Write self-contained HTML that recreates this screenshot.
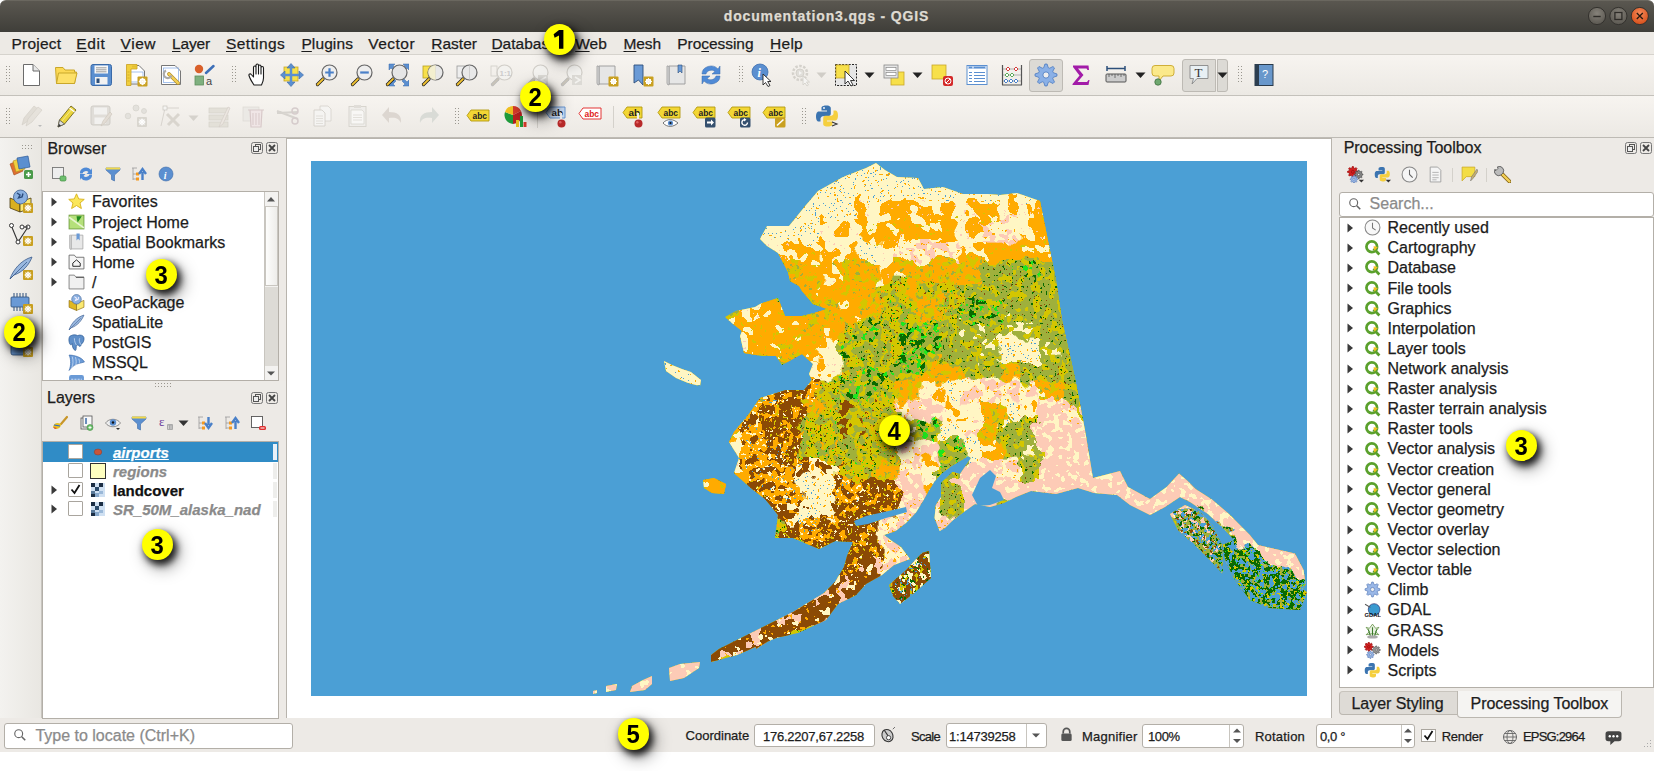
<!DOCTYPE html>
<html><head><meta charset="utf-8">
<style>
*{margin:0;padding:0;box-sizing:border-box}
html,body{width:1654px;height:771px;overflow:hidden;background:#fff;font-family:"Liberation Sans",sans-serif;color:#000}
.a,.abs{position:absolute}
.t{white-space:nowrap;-webkit-text-stroke:0.25px currentColor}
u{text-decoration:underline;text-underline-offset:2px}
#title{left:0;top:0;width:1654px;height:32px;background:linear-gradient(#5a5750,#3f3e39);border-radius:6px 6px 0 0;border-top:1px solid #6a675f}
#menu{left:0;top:32px;width:1654px;height:23px;background:#edeae5;border-bottom:1px solid #d6d3cd}
#tb1{left:0;top:55px;width:1654px;height:41px;background:linear-gradient(#f7f4f0,#ece9e4);border-bottom:1px solid #c4c1bb}
#tb2{left:0;top:96px;width:1654px;height:42px;background:linear-gradient(#f7f4f0,#ece9e4);border-bottom:1px solid #bdbab4}
#main{left:0;top:138px;width:1654px;height:580px;background:#edeae6}
#lefttb{left:0;top:138px;width:42px;height:580px;background:linear-gradient(90deg,#f3f2ef,#e9e7e2);border-right:1px solid #c8c5bf}
#status{left:0;top:718px;width:1654px;height:34px;background:#edeae6}
#canvas{left:286px;top:138px;width:1046px;height:581px;background:#fff;border:1px solid #b8b4ad}
.badge{border-radius:50%;background:#ffff00;box-shadow:3px 4px 7px 1px rgba(0,0,0,.85),5px 7px 16px 2px rgba(0,0,0,.35);text-align:center;font-weight:bold;color:#000;font-family:"Liberation Sans",sans-serif}
</style></head><body>
<div id="title" class="abs"></div>
<div id="menu" class="abs"></div>
<div id="tb1" class="abs"></div>
<div id="tb2" class="abs"></div>
<div id="main" class="abs"></div>
<div id="lefttb" class="abs"></div>
<div id="canvas" class="abs"></div>
<svg class="abs" style="left:311px;top:161px" width="996" height="535" viewBox="311 161 996 535">
<defs>
<clipPath id="land"><path d="M760,239 L767,226 L789,226 L806,205 L818,191 L843,177 L866,168 L876,163 L885,170 L897,177 L918,178 L924,189 L943,187 L963,194 L988,194 L1000,195 L1017,193 L1040,201 L1056,280 L1062,320 L1075,378 L1085,430 L1093,478 L1120,471 L1128,487 L1150,499 L1166.6,487 L1179,473.5 L1187.4,480.8 L1195.6,489 L1212,499.4 L1229,514 L1249.6,534.7 L1258,545 L1295,553.4 L1303.6,570 L1305.6,584.5 L1300,592 L1285,585 L1262,562 L1245,552 L1225,530 L1208,514 L1190,502 L1180,497 L1165,507 L1150,515 L1130,505 L1117,495 L1094,493 L1078,488 L1056,494 L1031,491 L1016,497 L1004,503 L990,507 L975,504 L963,512.6 L952.6,520.4 L945,528 L939.7,531 L934.5,518 L935.8,505 L941,497 L941,483 L952.6,472 L960,474 L971,458 L968,456 L950,467 L941,474 L934.5,481.5 L928,492 L923,501 L916,512.6 L906,523 L895.6,531 L884,535 L892,541 L901,547 L910,559 L894,565 L882,575 L866,584 L856,595 L838,604 L826,620 L798,633 L776,638 L737,655 L711,662 L711,655 L719,649 L759,629 L793,612 L824,593 L835,582 L844,567 L847,556 L853,542 L835,541 L819,549 L793,538 L775,538 L778,515 L765,499 L752,489 L734,473 L739,458 L729,442 L734,432 L749,414 L760,398 L786,390 L804,390 L812,380 L809,374 L813,364 L802,354 L791,360 L782,365 L776,356 L762,356 L744,353 L740,336 L742,331 L733,324 L725,317 L736,311 L755,307 L760,304 L778,298 L785,316 L802,316 L814,313 L827,309 L813,304 L802,291 L799,286 L790,281 L788,272 L778,253 L767,246 Z M664,361 L672,365 L682,369 L691,372 L701,380 L700,386 L688,383 L676,378 L666,371 Z M703,480 L714,478 L726,484 L724,494 L712,493 L704,488 Z M889,585 L905,571 L922,553 L929,551 L931,578 L914,593 L900,604 L893,596 Z M669,668 L680,664 L700,662 L699,668 L684,678 L670,681 Z M643,680 L652,676 L652,684 L645,690 L630,692 L632,686 Z M606,686 L617,684 L616,690 L606,692 Z M593,691 L597,690 L597,693 L593,694 Z M754,632 L771,627 L770,640 L756,649 Z M1170,514 L1185,505 L1200,512 L1212,525 L1222,545 L1223,574 L1210,560 L1195,545 L1178,530 Z M1222,545 L1240,538 L1262,564 L1290,582 L1307,592 L1300,610 L1270,608 L1250,600 L1235,580 L1226,562 Z"/></clipPath>
<filter id="disp" filterUnits="userSpaceOnUse" x="300" y="150" width="1020" height="560"><feTurbulence type="fractalNoise" baseFrequency="0.045" numOctaves="3" seed="11" result="t"/><feDisplacementMap in="SourceGraphic" in2="t" scale="26" xChannelSelector="R" yChannelSelector="G"/></filter>
<mask id="mC" maskUnits="userSpaceOnUse" x="300" y="150" width="1020" height="560"><g fill="#fff" filter="url(#disp)"><rect x="820" y="160" width="20.6" height="20.6"/><rect x="840" y="160" width="20.6" height="20.6"/><rect x="860" y="160" width="20.6" height="20.6"/><rect x="880" y="160" width="20.6" height="20.6"/><rect x="900" y="160" width="20.6" height="20.6"/><rect x="920" y="160" width="20.6" height="20.6"/><rect x="780" y="180" width="20.6" height="20.6"/><rect x="800" y="180" width="20.6" height="20.6"/><rect x="820" y="180" width="20.6" height="20.6"/><rect x="840" y="180" width="20.6" height="20.6"/><rect x="860" y="180" width="20.6" height="20.6"/><rect x="880" y="180" width="20.6" height="20.6"/><rect x="900" y="180" width="20.6" height="20.6"/><rect x="920" y="180" width="20.6" height="20.6"/><rect x="940" y="180" width="20.6" height="20.6"/><rect x="960" y="180" width="20.6" height="20.6"/><rect x="980" y="180" width="20.6" height="20.6"/><rect x="1020" y="180" width="20.6" height="20.6"/><rect x="760" y="200" width="20.6" height="20.6"/><rect x="780" y="200" width="20.6" height="20.6"/><rect x="800" y="200" width="20.6" height="20.6"/><rect x="820" y="200" width="20.6" height="20.6"/><rect x="840" y="200" width="20.6" height="20.6"/><rect x="740" y="220" width="20.6" height="20.6"/><rect x="760" y="220" width="20.6" height="20.6"/><rect x="780" y="220" width="20.6" height="20.6"/><rect x="800" y="220" width="20.6" height="20.6"/><rect x="860" y="240" width="20.6" height="20.6"/><rect x="1000" y="340" width="20.6" height="20.6"/><rect x="1020" y="340" width="20.6" height="20.6"/><rect x="940" y="380" width="20.6" height="20.6"/><rect x="1000" y="400" width="20.6" height="20.6"/><rect x="940" y="420" width="20.6" height="20.6"/><rect x="960" y="440" width="20.6" height="20.6"/><rect x="800" y="480" width="20.6" height="20.6"/><rect x="820" y="480" width="20.6" height="20.6"/><rect x="800" y="500" width="20.6" height="20.6"/><path d="M655,350 L710,350 L710,392 L655,392 Z"/></g></mask>
<mask id="mQ" maskUnits="userSpaceOnUse" x="300" y="150" width="1020" height="560"><g fill="#fff" filter="url(#disp)"><rect x="1000" y="180" width="20.6" height="20.6"/><rect x="1040" y="180" width="20.6" height="20.6"/><rect x="860" y="200" width="20.6" height="20.6"/><rect x="880" y="200" width="20.6" height="20.6"/><rect x="900" y="200" width="20.6" height="20.6"/><rect x="920" y="200" width="20.6" height="20.6"/><rect x="940" y="200" width="20.6" height="20.6"/><rect x="960" y="200" width="20.6" height="20.6"/><rect x="1000" y="200" width="20.6" height="20.6"/><rect x="1020" y="200" width="20.6" height="20.6"/><rect x="820" y="220" width="20.6" height="20.6"/><rect x="840" y="220" width="20.6" height="20.6"/><rect x="960" y="220" width="20.6" height="20.6"/><rect x="1020" y="220" width="20.6" height="20.6"/><rect x="760" y="240" width="20.6" height="20.6"/><rect x="780" y="240" width="20.6" height="20.6"/><rect x="820" y="240" width="20.6" height="20.6"/><rect x="840" y="240" width="20.6" height="20.6"/><rect x="880" y="240" width="20.6" height="20.6"/><rect x="960" y="240" width="20.6" height="20.6"/><rect x="820" y="260" width="20.6" height="20.6"/><rect x="880" y="260" width="20.6" height="20.6"/><rect x="740" y="300" width="20.6" height="20.6"/><rect x="720" y="320" width="20.6" height="20.6"/><rect x="700" y="340" width="20.6" height="20.6"/><rect x="720" y="340" width="20.6" height="20.6"/><rect x="820" y="340" width="20.6" height="20.6"/><rect x="800" y="360" width="20.6" height="20.6"/><rect x="820" y="360" width="20.6" height="20.6"/><rect x="920" y="380" width="20.6" height="20.6"/><rect x="940" y="400" width="20.6" height="20.6"/><rect x="960" y="400" width="20.6" height="20.6"/><rect x="1020" y="400" width="20.6" height="20.6"/><rect x="720" y="440" width="20.6" height="20.6"/><rect x="720" y="460" width="20.6" height="20.6"/><rect x="920" y="460" width="20.6" height="20.6"/><rect x="920" y="480" width="20.6" height="20.6"/></g></mask>
<mask id="mO" maskUnits="userSpaceOnUse" x="300" y="150" width="1020" height="560"><g fill="#fff" filter="url(#disp)"><rect x="980" y="200" width="20.6" height="20.6"/><rect x="1040" y="200" width="20.6" height="20.6"/><rect x="860" y="220" width="20.6" height="20.6"/><rect x="880" y="220" width="20.6" height="20.6"/><rect x="900" y="220" width="20.6" height="20.6"/><rect x="920" y="220" width="20.6" height="20.6"/><rect x="940" y="220" width="20.6" height="20.6"/><rect x="1040" y="220" width="20.6" height="20.6"/><rect x="800" y="240" width="20.6" height="20.6"/><rect x="980" y="240" width="20.6" height="20.6"/><rect x="1000" y="240" width="20.6" height="20.6"/><rect x="1020" y="240" width="20.6" height="20.6"/><rect x="1040" y="240" width="20.6" height="20.6"/><rect x="800" y="260" width="20.6" height="20.6"/><rect x="780" y="280" width="20.6" height="20.6"/><rect x="820" y="280" width="20.6" height="20.6"/><rect x="760" y="300" width="20.6" height="20.6"/><rect x="780" y="300" width="20.6" height="20.6"/><rect x="840" y="300" width="20.6" height="20.6"/><rect x="740" y="320" width="20.6" height="20.6"/><rect x="760" y="320" width="20.6" height="20.6"/><rect x="780" y="320" width="20.6" height="20.6"/><rect x="820" y="320" width="20.6" height="20.6"/><rect x="740" y="340" width="20.6" height="20.6"/><rect x="760" y="340" width="20.6" height="20.6"/><rect x="800" y="340" width="20.6" height="20.6"/><rect x="720" y="420" width="20.6" height="20.6"/><rect x="980" y="440" width="20.6" height="20.6"/><path d="M695,472 L732,472 L732,500 L695,500 Z"/></g></mask>
<mask id="mK" maskUnits="userSpaceOnUse" x="300" y="150" width="1020" height="560"><g fill="#fff" filter="url(#disp)"><rect x="980" y="220" width="20.6" height="20.6"/><rect x="1000" y="220" width="20.6" height="20.6"/><rect x="900" y="240" width="20.6" height="20.6"/><rect x="920" y="240" width="20.6" height="20.6"/><rect x="940" y="240" width="20.6" height="20.6"/><rect x="960" y="380" width="20.6" height="20.6"/><rect x="980" y="380" width="20.6" height="20.6"/><rect x="1000" y="380" width="20.6" height="20.6"/><rect x="1020" y="380" width="20.6" height="20.6"/><rect x="900" y="400" width="20.6" height="20.6"/><rect x="1060" y="400" width="20.6" height="20.6"/><rect x="960" y="420" width="20.6" height="20.6"/><rect x="900" y="440" width="20.6" height="20.6"/><rect x="900" y="460" width="20.6" height="20.6"/><rect x="1000" y="460" width="20.6" height="20.6"/><rect x="900" y="500" width="20.6" height="20.6"/><rect x="920" y="500" width="20.6" height="20.6"/><rect x="880" y="520" width="20.6" height="20.6"/><rect x="900" y="520" width="20.6" height="20.6"/><rect x="920" y="520" width="20.6" height="20.6"/><rect x="940" y="520" width="20.6" height="20.6"/><rect x="880" y="540" width="20.6" height="20.6"/><rect x="900" y="540" width="20.6" height="20.6"/><rect x="880" y="560" width="20.6" height="20.6"/><rect x="900" y="560" width="20.6" height="20.6"/><path d="M785,610 L830,596 L832,622 L795,634 Z"/><path d="M745,640 L770,632 L770,648 L750,652 Z"/></g></mask>
<mask id="mM" maskUnits="userSpaceOnUse" x="300" y="150" width="1020" height="560"><g fill="#fff" filter="url(#disp)"><rect x="780" y="260" width="20.6" height="20.6"/><rect x="840" y="260" width="20.6" height="20.6"/><rect x="860" y="260" width="20.6" height="20.6"/><rect x="900" y="260" width="20.6" height="20.6"/><rect x="920" y="260" width="20.6" height="20.6"/><rect x="940" y="260" width="20.6" height="20.6"/><rect x="960" y="260" width="20.6" height="20.6"/><rect x="800" y="280" width="20.6" height="20.6"/><rect x="840" y="280" width="20.6" height="20.6"/><rect x="860" y="280" width="20.6" height="20.6"/><rect x="900" y="280" width="20.6" height="20.6"/><rect x="800" y="300" width="20.6" height="20.6"/><rect x="820" y="300" width="20.6" height="20.6"/><rect x="860" y="300" width="20.6" height="20.6"/><rect x="920" y="300" width="20.6" height="20.6"/><rect x="800" y="320" width="20.6" height="20.6"/><rect x="780" y="340" width="20.6" height="20.6"/><rect x="920" y="360" width="20.6" height="20.6"/><rect x="940" y="360" width="20.6" height="20.6"/><rect x="1000" y="360" width="20.6" height="20.6"/><rect x="900" y="380" width="20.6" height="20.6"/><rect x="1040" y="380" width="20.6" height="20.6"/><rect x="800" y="400" width="20.6" height="20.6"/><rect x="980" y="400" width="20.6" height="20.6"/><rect x="980" y="420" width="20.6" height="20.6"/><rect x="880" y="460" width="20.6" height="20.6"/></g></mask>
<mask id="mL" maskUnits="userSpaceOnUse" x="300" y="150" width="1020" height="560"><g fill="#fff" filter="url(#disp)"><rect x="980" y="260" width="20.6" height="20.6"/><rect x="1000" y="260" width="20.6" height="20.6"/><rect x="1040" y="260" width="20.6" height="20.6"/><rect x="1060" y="260" width="20.6" height="20.6"/><rect x="960" y="280" width="20.6" height="20.6"/><rect x="980" y="280" width="20.6" height="20.6"/><rect x="1000" y="280" width="20.6" height="20.6"/><rect x="1020" y="280" width="20.6" height="20.6"/><rect x="1040" y="280" width="20.6" height="20.6"/><rect x="1060" y="280" width="20.6" height="20.6"/><rect x="1000" y="300" width="20.6" height="20.6"/><rect x="1020" y="300" width="20.6" height="20.6"/><rect x="1040" y="300" width="20.6" height="20.6"/><rect x="1060" y="300" width="20.6" height="20.6"/><rect x="940" y="320" width="20.6" height="20.6"/><rect x="980" y="320" width="20.6" height="20.6"/><rect x="1040" y="320" width="20.6" height="20.6"/><rect x="1060" y="320" width="20.6" height="20.6"/><rect x="860" y="340" width="20.6" height="20.6"/><rect x="940" y="340" width="20.6" height="20.6"/><rect x="960" y="340" width="20.6" height="20.6"/><rect x="1060" y="340" width="20.6" height="20.6"/><rect x="960" y="360" width="20.6" height="20.6"/><rect x="980" y="360" width="20.6" height="20.6"/><rect x="1020" y="360" width="20.6" height="20.6"/><rect x="1040" y="360" width="20.6" height="20.6"/><rect x="1060" y="360" width="20.6" height="20.6"/><rect x="1060" y="380" width="20.6" height="20.6"/><rect x="1080" y="380" width="20.6" height="20.6"/><rect x="1080" y="400" width="20.6" height="20.6"/><rect x="1000" y="420" width="20.6" height="20.6"/><rect x="1020" y="420" width="20.6" height="20.6"/><rect x="840" y="440" width="20.6" height="20.6"/><rect x="1000" y="440" width="20.6" height="20.6"/><rect x="940" y="460" width="20.6" height="20.6"/><rect x="1020" y="460" width="20.6" height="20.6"/><rect x="940" y="480" width="20.6" height="20.6"/><rect x="940" y="500" width="20.6" height="20.6"/></g></mask>
<mask id="mG" maskUnits="userSpaceOnUse" x="300" y="150" width="1020" height="560"><g fill="#fff" filter="url(#disp)"><rect x="1020" y="260" width="20.6" height="20.6"/><rect x="980" y="300" width="20.6" height="20.6"/><rect x="860" y="320" width="20.6" height="20.6"/><rect x="900" y="320" width="20.6" height="20.6"/><rect x="920" y="320" width="20.6" height="20.6"/><rect x="840" y="340" width="20.6" height="20.6"/><rect x="920" y="340" width="20.6" height="20.6"/><rect x="860" y="360" width="20.6" height="20.6"/><rect x="880" y="360" width="20.6" height="20.6"/><rect x="900" y="360" width="20.6" height="20.6"/><rect x="840" y="380" width="20.6" height="20.6"/><rect x="860" y="380" width="20.6" height="20.6"/><rect x="920" y="420" width="20.6" height="20.6"/><rect x="940" y="440" width="20.6" height="20.6"/></g></mask>
<mask id="mD" maskUnits="userSpaceOnUse" x="300" y="150" width="1020" height="560"><g fill="#fff" filter="url(#disp)"><rect x="960" y="300" width="20.6" height="20.6"/><rect x="900" y="340" width="20.6" height="20.6"/></g></mask>
<mask id="mE" maskUnits="userSpaceOnUse" x="300" y="150" width="1020" height="560"><g fill="#fff" filter="url(#disp)"><rect x="960" y="320" width="20.6" height="20.6"/><rect x="1000" y="320" width="20.6" height="20.6"/><rect x="1020" y="320" width="20.6" height="20.6"/><rect x="980" y="340" width="20.6" height="20.6"/><rect x="1040" y="340" width="20.6" height="20.6"/><rect x="900" y="420" width="20.6" height="20.6"/><rect x="1020" y="440" width="20.6" height="20.6"/></g></mask>
<mask id="mW" maskUnits="userSpaceOnUse" x="300" y="150" width="1020" height="560"><g fill="#fff" filter="url(#disp)"><rect x="760" y="380" width="20.6" height="20.6"/><rect x="800" y="380" width="20.6" height="20.6"/><rect x="740" y="400" width="20.6" height="20.6"/><rect x="740" y="420" width="20.6" height="20.6"/><rect x="740" y="440" width="20.6" height="20.6"/><rect x="760" y="440" width="20.6" height="20.6"/><rect x="740" y="460" width="20.6" height="20.6"/><rect x="760" y="460" width="20.6" height="20.6"/><rect x="780" y="460" width="20.6" height="20.6"/><rect x="760" y="480" width="20.6" height="20.6"/><rect x="780" y="480" width="20.6" height="20.6"/><rect x="840" y="480" width="20.6" height="20.6"/><rect x="800" y="520" width="20.6" height="20.6"/></g></mask>
<mask id="mB" maskUnits="userSpaceOnUse" x="300" y="150" width="1020" height="560"><g fill="#fff" filter="url(#disp)"><rect x="780" y="380" width="20.6" height="20.6"/><rect x="760" y="400" width="20.6" height="20.6"/><rect x="780" y="400" width="20.6" height="20.6"/><rect x="760" y="420" width="20.6" height="20.6"/><rect x="780" y="420" width="20.6" height="20.6"/><rect x="780" y="440" width="20.6" height="20.6"/><rect x="740" y="480" width="20.6" height="20.6"/><rect x="860" y="480" width="20.6" height="20.6"/><rect x="880" y="480" width="20.6" height="20.6"/><rect x="760" y="500" width="20.6" height="20.6"/><rect x="840" y="500" width="20.6" height="20.6"/><rect x="860" y="500" width="20.6" height="20.6"/><rect x="880" y="500" width="20.6" height="20.6"/><rect x="780" y="520" width="20.6" height="20.6"/><rect x="820" y="520" width="20.6" height="20.6"/><rect x="840" y="520" width="20.6" height="20.6"/><rect x="860" y="520" width="20.6" height="20.6"/><rect x="800" y="540" width="20.6" height="20.6"/><rect x="820" y="540" width="20.6" height="20.6"/><rect x="840" y="540" width="20.6" height="20.6"/><rect x="860" y="540" width="20.6" height="20.6"/><rect x="820" y="560" width="20.6" height="20.6"/><rect x="840" y="560" width="20.6" height="20.6"/></g></mask>
<mask id="mU" maskUnits="userSpaceOnUse" x="300" y="150" width="1020" height="560"><g fill="#fff" filter="url(#disp)"><rect x="840" y="400" width="20.6" height="20.6"/><rect x="840" y="420" width="20.6" height="20.6"/></g></mask>
<mask id="mP" maskUnits="userSpaceOnUse" x="300" y="150" width="1020" height="560"><g fill="#fff" filter="url(#disp)"><rect x="920" y="400" width="20.6" height="20.6"/><rect x="1040" y="400" width="20.6" height="20.6"/><rect x="1040" y="420" width="20.6" height="20.6"/><rect x="1060" y="420" width="20.6" height="20.6"/><rect x="1080" y="420" width="20.6" height="20.6"/><rect x="920" y="440" width="20.6" height="20.6"/><rect x="1040" y="440" width="20.6" height="20.6"/><rect x="1060" y="440" width="20.6" height="20.6"/><rect x="1080" y="440" width="20.6" height="20.6"/><rect x="960" y="460" width="20.6" height="20.6"/><rect x="980" y="460" width="20.6" height="20.6"/><rect x="1040" y="460" width="20.6" height="20.6"/><rect x="1060" y="460" width="20.6" height="20.6"/><rect x="1080" y="460" width="20.6" height="20.6"/><rect x="900" y="480" width="20.6" height="20.6"/><rect x="960" y="480" width="20.6" height="20.6"/><rect x="980" y="480" width="20.6" height="20.6"/><rect x="1000" y="480" width="20.6" height="20.6"/><rect x="1020" y="480" width="20.6" height="20.6"/><rect x="1040" y="480" width="20.6" height="20.6"/><rect x="1060" y="480" width="20.6" height="20.6"/><rect x="1080" y="480" width="20.6" height="20.6"/><rect x="960" y="500" width="20.6" height="20.6"/><rect x="980" y="500" width="20.6" height="20.6"/><rect x="960" y="520" width="20.6" height="20.6"/><path d="M590,660 L712,655 L712,700 L590,700 Z"/><path d="M1090,455 L1200,470 L1310,540 L1310,600 L1262,575 L1200,510 L1150,525 L1090,505 Z"/><path d="M1085,380 L1110,380 L1110,470 L1085,470 Z"/></g></mask>
<mask id="mX" maskUnits="userSpaceOnUse" x="300" y="150" width="1020" height="560"><g fill="#fff" filter="url(#disp)"><rect x="800" y="460" width="20.6" height="20.6"/><rect x="820" y="460" width="20.6" height="20.6"/><rect x="780" y="500" width="20.6" height="20.6"/><rect x="820" y="500" width="20.6" height="20.6"/></g></mask>
<mask id="mR" maskUnits="userSpaceOnUse" x="300" y="150" width="1020" height="560"><g fill="#fff" filter="url(#disp)"><rect x="860" y="560" width="20.6" height="20.6"/><path d="M700,575 L870,575 L860,600 L820,625 L760,650 L700,670 Z"/></g></mask>
<mask id="mZ" maskUnits="userSpaceOnUse" x="300" y="150" width="1020" height="560"><g fill="#fff" filter="url(#disp)"><rect x="920" y="560" width="20.6" height="20.6"/><path d="M884,588 L903,568 L920,548 L934,546 L936,580 L916,598 L900,609 L888,600 Z"/></g></mask>
<mask id="mV" maskUnits="userSpaceOnUse" x="300" y="150" width="1020" height="560"><g fill="#fff" filter="url(#disp)"><path d="M1165,508 L1205,505 L1225,530 L1230,580 L1195,560 Z"/></g></mask>
<mask id="mI" maskUnits="userSpaceOnUse" x="300" y="150" width="1020" height="560"><g fill="#fff" filter="url(#disp)"><path d="M1218,538 L1262,560 L1310,580 L1310,615 L1240,615 L1220,570 Z"/></g></mask>
<filter id="n_Y_8" filterUnits="userSpaceOnUse" x="311" y="161" width="996" height="535" color-interpolation-filters="sRGB"><feTurbulence type="fractalNoise" baseFrequency="0.12" numOctaves="2" seed="8" result="n"/><feColorMatrix in="n" type="matrix" values="0 0 0 0 0  0 0 0 0 0  0 0 0 0 0  1.6 0 0 0 -0.3" result="a"/><feComponentTransfer in="a" result="m"><feFuncA type="discrete" tableValues="0 0 0 0 0 0 0 0 0 0 0 0 0 0 0 0 0 0 0 0 0 0 0 1 1 1 1 1 1 1 1 1 1 1 1 1 1 1 1 1"/></feComponentTransfer><feComposite in="SourceGraphic" in2="m" operator="in"/></filter>
<filter id="n_Y_9" filterUnits="userSpaceOnUse" x="311" y="161" width="996" height="535" color-interpolation-filters="sRGB"><feTurbulence type="fractalNoise" baseFrequency="0.3" numOctaves="2" seed="9" result="n"/><feColorMatrix in="n" type="matrix" values="0 0 0 0 0  0 0 0 0 0  0 0 0 0 0  1.6 0 0 0 -0.3" result="a"/><feComponentTransfer in="a" result="m"><feFuncA type="discrete" tableValues="0 0 0 0 0 0 0 0 0 0 0 0 0 0 0 0 0 0 0 0 0 0 0 0 0 0 0 0 0 0 0 0 0 1 1 1 1 1 1 1"/></feComponentTransfer><feComposite in="SourceGraphic" in2="m" operator="in"/></filter>
<filter id="n_Y_10" filterUnits="userSpaceOnUse" x="311" y="161" width="996" height="535" color-interpolation-filters="sRGB"><feTurbulence type="fractalNoise" baseFrequency="0.2" numOctaves="2" seed="10" result="n"/><feColorMatrix in="n" type="matrix" values="0 0 0 0 0  0 0 0 0 0  0 0 0 0 0  1.6 0 0 0 -0.3" result="a"/><feComponentTransfer in="a" result="m"><feFuncA type="discrete" tableValues="0 0 0 0 0 0 0 0 0 0 0 0 0 0 0 0 0 0 0 0 0 0 0 0 0 0 0 0 0 0 0 0 1 1 1 1 1 1 1 1"/></feComponentTransfer><feComposite in="SourceGraphic" in2="m" operator="in"/></filter>
<filter id="n_Y_11" filterUnits="userSpaceOnUse" x="311" y="161" width="996" height="535" color-interpolation-filters="sRGB"><feTurbulence type="fractalNoise" baseFrequency="0.4" numOctaves="2" seed="11" result="n"/><feColorMatrix in="n" type="matrix" values="0 0 0 0 0  0 0 0 0 0  0 0 0 0 0  1.6 0 0 0 -0.3" result="a"/><feComponentTransfer in="a" result="m"><feFuncA type="discrete" tableValues="0 0 0 0 0 0 0 0 0 0 0 0 0 0 0 0 0 0 0 0 0 0 0 0 0 0 0 0 0 0 0 0 0 0 1 1 1 1 1 1"/></feComponentTransfer><feComposite in="SourceGraphic" in2="m" operator="in"/></filter>
<filter id="n_Y_12" filterUnits="userSpaceOnUse" x="311" y="161" width="996" height="535" color-interpolation-filters="sRGB"><feTurbulence type="fractalNoise" baseFrequency="0.4" numOctaves="2" seed="12" result="n"/><feColorMatrix in="n" type="matrix" values="0 0 0 0 0  0 0 0 0 0  0 0 0 0 0  1.6 0 0 0 -0.3" result="a"/><feComponentTransfer in="a" result="m"><feFuncA type="discrete" tableValues="0 0 0 0 0 0 0 0 0 0 0 0 0 0 0 0 0 0 0 0 0 0 0 0 0 0 0 0 0 0 0 0 0 0 0 0 1 1 1 1"/></feComponentTransfer><feComposite in="SourceGraphic" in2="m" operator="in"/></filter>
<filter id="n_C_1" filterUnits="userSpaceOnUse" x="311" y="161" width="996" height="535" color-interpolation-filters="sRGB"><feTurbulence type="fractalNoise" baseFrequency="0.3" numOctaves="2" seed="1" result="n"/><feColorMatrix in="n" type="matrix" values="0 0 0 0 0  0 0 0 0 0  0 0 0 0 0  1.6 0 0 0 -0.3" result="a"/><feComponentTransfer in="a" result="m"><feFuncA type="discrete" tableValues="0 0 0 0 0 0 0 0 0 0 0 0 0 0 0 0 0 0 0 0 0 0 0 0 0 0 0 0 0 0 0 0 0 1 1 1 1 1 1 1"/></feComponentTransfer><feComposite in="SourceGraphic" in2="m" operator="in"/></filter>
<filter id="n_C_2" filterUnits="userSpaceOnUse" x="311" y="161" width="996" height="535" color-interpolation-filters="sRGB"><feTurbulence type="fractalNoise" baseFrequency="0.6" numOctaves="2" seed="2" result="n"/><feColorMatrix in="n" type="matrix" values="0 0 0 0 0  0 0 0 0 0  0 0 0 0 0  1.6 0 0 0 -0.3" result="a"/><feComponentTransfer in="a" result="m"><feFuncA type="discrete" tableValues="0 0 0 0 0 0 0 0 0 0 0 0 0 0 0 0 0 0 0 0 0 0 0 0 0 0 0 0 0 0 0 0 0 0 1 1 1 1 1 1"/></feComponentTransfer><feComposite in="SourceGraphic" in2="m" operator="in"/></filter>
<filter id="n_Q_3" filterUnits="userSpaceOnUse" x="311" y="161" width="996" height="535" color-interpolation-filters="sRGB"><feTurbulence type="fractalNoise" baseFrequency="0.06" numOctaves="2" seed="3" result="n"/><feColorMatrix in="n" type="matrix" values="0 0 0 0 0  0 0 0 0 0  0 0 0 0 0  1.6 0 0 0 -0.3" result="a"/><feComponentTransfer in="a" result="m"><feFuncA type="discrete" tableValues="0 0 0 0 0 0 0 0 0 0 0 0 0 0 0 0 0 0 0 0 0 0 1 1 1 1 1 1 1 1 1 1 1 1 1 1 1 1 1 1"/></feComponentTransfer><feComposite in="SourceGraphic" in2="m" operator="in"/></filter>
<filter id="n_Q_34" filterUnits="userSpaceOnUse" x="311" y="161" width="996" height="535" color-interpolation-filters="sRGB"><feTurbulence type="fractalNoise" baseFrequency="0.3" numOctaves="2" seed="34" result="n"/><feColorMatrix in="n" type="matrix" values="0 0 0 0 0  0 0 0 0 0  0 0 0 0 0  1.6 0 0 0 -0.3" result="a"/><feComponentTransfer in="a" result="m"><feFuncA type="discrete" tableValues="0 0 0 0 0 0 0 0 0 0 0 0 0 0 0 0 0 0 0 0 0 0 0 0 0 0 0 0 0 0 0 0 0 0 0 1 1 1 1 1"/></feComponentTransfer><feComposite in="SourceGraphic" in2="m" operator="in"/></filter>
<filter id="n_O_4" filterUnits="userSpaceOnUse" x="311" y="161" width="996" height="535" color-interpolation-filters="sRGB"><feTurbulence type="fractalNoise" baseFrequency="0.09" numOctaves="2" seed="4" result="n"/><feColorMatrix in="n" type="matrix" values="0 0 0 0 0  0 0 0 0 0  0 0 0 0 0  1.6 0 0 0 -0.3" result="a"/><feComponentTransfer in="a" result="m"><feFuncA type="discrete" tableValues="0 0 0 0 0 0 0 0 0 0 0 0 0 0 0 0 0 0 0 0 0 0 0 0 0 0 0 0 0 1 1 1 1 1 1 1 1 1 1 1"/></feComponentTransfer><feComposite in="SourceGraphic" in2="m" operator="in"/></filter>
<filter id="n_O_5" filterUnits="userSpaceOnUse" x="311" y="161" width="996" height="535" color-interpolation-filters="sRGB"><feTurbulence type="fractalNoise" baseFrequency="0.25" numOctaves="2" seed="5" result="n"/><feColorMatrix in="n" type="matrix" values="0 0 0 0 0  0 0 0 0 0  0 0 0 0 0  1.6 0 0 0 -0.3" result="a"/><feComponentTransfer in="a" result="m"><feFuncA type="discrete" tableValues="0 0 0 0 0 0 0 0 0 0 0 0 0 0 0 0 0 0 0 0 0 0 0 0 0 0 0 0 0 0 0 0 0 1 1 1 1 1 1 1"/></feComponentTransfer><feComposite in="SourceGraphic" in2="m" operator="in"/></filter>
<filter id="n_K_25" filterUnits="userSpaceOnUse" x="311" y="161" width="996" height="535" color-interpolation-filters="sRGB"><feTurbulence type="fractalNoise" baseFrequency="0.1" numOctaves="2" seed="25" result="n"/><feColorMatrix in="n" type="matrix" values="0 0 0 0 0  0 0 0 0 0  0 0 0 0 0  1.6 0 0 0 -0.3" result="a"/><feComponentTransfer in="a" result="m"><feFuncA type="discrete" tableValues="0 0 0 0 0 0 0 0 0 0 0 0 0 0 0 0 0 0 0 0 0 1 1 1 1 1 1 1 1 1 1 1 1 1 1 1 1 1 1 1"/></feComponentTransfer><feComposite in="SourceGraphic" in2="m" operator="in"/></filter>
<filter id="n_K_26" filterUnits="userSpaceOnUse" x="311" y="161" width="996" height="535" color-interpolation-filters="sRGB"><feTurbulence type="fractalNoise" baseFrequency="0.3" numOctaves="2" seed="26" result="n"/><feColorMatrix in="n" type="matrix" values="0 0 0 0 0  0 0 0 0 0  0 0 0 0 0  1.6 0 0 0 -0.3" result="a"/><feComponentTransfer in="a" result="m"><feFuncA type="discrete" tableValues="0 0 0 0 0 0 0 0 0 0 0 0 0 0 0 0 0 0 0 0 0 0 0 0 0 0 0 0 0 0 0 0 1 1 1 1 1 1 1 1"/></feComponentTransfer><feComposite in="SourceGraphic" in2="m" operator="in"/></filter>
<filter id="n_M_6" filterUnits="userSpaceOnUse" x="311" y="161" width="996" height="535" color-interpolation-filters="sRGB"><feTurbulence type="fractalNoise" baseFrequency="0.12" numOctaves="2" seed="6" result="n"/><feColorMatrix in="n" type="matrix" values="0 0 0 0 0  0 0 0 0 0  0 0 0 0 0  1.6 0 0 0 -0.3" result="a"/><feComponentTransfer in="a" result="m"><feFuncA type="discrete" tableValues="0 0 0 0 0 0 0 0 0 0 0 0 0 0 0 0 0 0 0 0 0 0 0 1 1 1 1 1 1 1 1 1 1 1 1 1 1 1 1 1"/></feComponentTransfer><feComposite in="SourceGraphic" in2="m" operator="in"/></filter>
<filter id="n_M_7" filterUnits="userSpaceOnUse" x="311" y="161" width="996" height="535" color-interpolation-filters="sRGB"><feTurbulence type="fractalNoise" baseFrequency="0.25" numOctaves="2" seed="7" result="n"/><feColorMatrix in="n" type="matrix" values="0 0 0 0 0  0 0 0 0 0  0 0 0 0 0  1.6 0 0 0 -0.3" result="a"/><feComponentTransfer in="a" result="m"><feFuncA type="discrete" tableValues="0 0 0 0 0 0 0 0 0 0 0 0 0 0 0 0 0 0 0 0 0 0 0 0 0 0 0 0 0 0 0 1 1 1 1 1 1 1 1 1"/></feComponentTransfer><feComposite in="SourceGraphic" in2="m" operator="in"/></filter>
<filter id="n_L_16" filterUnits="userSpaceOnUse" x="311" y="161" width="996" height="535" color-interpolation-filters="sRGB"><feTurbulence type="fractalNoise" baseFrequency="0.12" numOctaves="2" seed="16" result="n"/><feColorMatrix in="n" type="matrix" values="0 0 0 0 0  0 0 0 0 0  0 0 0 0 0  1.6 0 0 0 -0.3" result="a"/><feComponentTransfer in="a" result="m"><feFuncA type="discrete" tableValues="0 0 0 0 0 0 0 0 0 0 0 0 0 0 0 0 0 0 0 0 0 0 0 0 1 1 1 1 1 1 1 1 1 1 1 1 1 1 1 1"/></feComponentTransfer><feComposite in="SourceGraphic" in2="m" operator="in"/></filter>
<filter id="n_L_17" filterUnits="userSpaceOnUse" x="311" y="161" width="996" height="535" color-interpolation-filters="sRGB"><feTurbulence type="fractalNoise" baseFrequency="0.35" numOctaves="2" seed="17" result="n"/><feColorMatrix in="n" type="matrix" values="0 0 0 0 0  0 0 0 0 0  0 0 0 0 0  1.6 0 0 0 -0.3" result="a"/><feComponentTransfer in="a" result="m"><feFuncA type="discrete" tableValues="0 0 0 0 0 0 0 0 0 0 0 0 0 0 0 0 0 0 0 0 0 0 0 0 0 0 0 0 0 0 0 0 0 1 1 1 1 1 1 1"/></feComponentTransfer><feComposite in="SourceGraphic" in2="m" operator="in"/></filter>
<filter id="n_L_18" filterUnits="userSpaceOnUse" x="311" y="161" width="996" height="535" color-interpolation-filters="sRGB"><feTurbulence type="fractalNoise" baseFrequency="0.45" numOctaves="2" seed="18" result="n"/><feColorMatrix in="n" type="matrix" values="0 0 0 0 0  0 0 0 0 0  0 0 0 0 0  1.6 0 0 0 -0.3" result="a"/><feComponentTransfer in="a" result="m"><feFuncA type="discrete" tableValues="0 0 0 0 0 0 0 0 0 0 0 0 0 0 0 0 0 0 0 0 0 0 0 0 0 0 0 0 0 0 0 0 0 0 0 1 1 1 1 1"/></feComponentTransfer><feComposite in="SourceGraphic" in2="m" operator="in"/></filter>
<filter id="n_G_13" filterUnits="userSpaceOnUse" x="311" y="161" width="996" height="535" color-interpolation-filters="sRGB"><feTurbulence type="fractalNoise" baseFrequency="0.15" numOctaves="2" seed="13" result="n"/><feColorMatrix in="n" type="matrix" values="0 0 0 0 0  0 0 0 0 0  0 0 0 0 0  1.6 0 0 0 -0.3" result="a"/><feComponentTransfer in="a" result="m"><feFuncA type="discrete" tableValues="0 0 0 0 0 0 0 0 0 0 0 0 0 0 0 0 0 0 0 0 0 0 0 0 0 0 0 1 1 1 1 1 1 1 1 1 1 1 1 1"/></feComponentTransfer><feComposite in="SourceGraphic" in2="m" operator="in"/></filter>
<filter id="n_G_14" filterUnits="userSpaceOnUse" x="311" y="161" width="996" height="535" color-interpolation-filters="sRGB"><feTurbulence type="fractalNoise" baseFrequency="0.18" numOctaves="2" seed="14" result="n"/><feColorMatrix in="n" type="matrix" values="0 0 0 0 0  0 0 0 0 0  0 0 0 0 0  1.6 0 0 0 -0.3" result="a"/><feComponentTransfer in="a" result="m"><feFuncA type="discrete" tableValues="0 0 0 0 0 0 0 0 0 0 0 0 0 0 0 0 0 0 0 0 0 0 0 0 0 0 0 1 1 1 1 1 1 1 1 1 1 1 1 1"/></feComponentTransfer><feComposite in="SourceGraphic" in2="m" operator="in"/></filter>
<filter id="n_G_15" filterUnits="userSpaceOnUse" x="311" y="161" width="996" height="535" color-interpolation-filters="sRGB"><feTurbulence type="fractalNoise" baseFrequency="0.15" numOctaves="2" seed="15" result="n"/><feColorMatrix in="n" type="matrix" values="0 0 0 0 0  0 0 0 0 0  0 0 0 0 0  1.6 0 0 0 -0.3" result="a"/><feComponentTransfer in="a" result="m"><feFuncA type="discrete" tableValues="0 0 0 0 0 0 0 0 0 0 0 0 0 0 0 0 0 0 0 0 0 0 0 0 0 1 1 1 1 1 1 1 1 1 1 1 1 1 1 1"/></feComponentTransfer><feComposite in="SourceGraphic" in2="m" operator="in"/></filter>
<filter id="n_D_35" filterUnits="userSpaceOnUse" x="311" y="161" width="996" height="535" color-interpolation-filters="sRGB"><feTurbulence type="fractalNoise" baseFrequency="0.13" numOctaves="2" seed="35" result="n"/><feColorMatrix in="n" type="matrix" values="0 0 0 0 0  0 0 0 0 0  0 0 0 0 0  1.6 0 0 0 -0.3" result="a"/><feComponentTransfer in="a" result="m"><feFuncA type="discrete" tableValues="0 0 0 0 0 0 0 0 0 0 0 0 0 0 0 0 0 0 0 0 0 0 1 1 1 1 1 1 1 1 1 1 1 1 1 1 1 1 1 1"/></feComponentTransfer><feComposite in="SourceGraphic" in2="m" operator="in"/></filter>
<filter id="n_D_36" filterUnits="userSpaceOnUse" x="311" y="161" width="996" height="535" color-interpolation-filters="sRGB"><feTurbulence type="fractalNoise" baseFrequency="0.25" numOctaves="2" seed="36" result="n"/><feColorMatrix in="n" type="matrix" values="0 0 0 0 0  0 0 0 0 0  0 0 0 0 0  1.6 0 0 0 -0.3" result="a"/><feComponentTransfer in="a" result="m"><feFuncA type="discrete" tableValues="0 0 0 0 0 0 0 0 0 0 0 0 0 0 0 0 0 0 0 0 0 0 0 0 0 0 0 0 0 1 1 1 1 1 1 1 1 1 1 1"/></feComponentTransfer><feComposite in="SourceGraphic" in2="m" operator="in"/></filter>
<filter id="n_D_37" filterUnits="userSpaceOnUse" x="311" y="161" width="996" height="535" color-interpolation-filters="sRGB"><feTurbulence type="fractalNoise" baseFrequency="0.2" numOctaves="2" seed="37" result="n"/><feColorMatrix in="n" type="matrix" values="0 0 0 0 0  0 0 0 0 0  0 0 0 0 0  1.6 0 0 0 -0.3" result="a"/><feComponentTransfer in="a" result="m"><feFuncA type="discrete" tableValues="0 0 0 0 0 0 0 0 0 0 0 0 0 0 0 0 0 0 0 0 0 0 0 0 0 0 0 0 0 1 1 1 1 1 1 1 1 1 1 1"/></feComponentTransfer><feComposite in="SourceGraphic" in2="m" operator="in"/></filter>
<filter id="n_E_38" filterUnits="userSpaceOnUse" x="311" y="161" width="996" height="535" color-interpolation-filters="sRGB"><feTurbulence type="fractalNoise" baseFrequency="0.12" numOctaves="2" seed="38" result="n"/><feColorMatrix in="n" type="matrix" values="0 0 0 0 0  0 0 0 0 0  0 0 0 0 0  1.6 0 0 0 -0.3" result="a"/><feComponentTransfer in="a" result="m"><feFuncA type="discrete" tableValues="0 0 0 0 0 0 0 0 0 0 0 0 0 0 0 0 0 0 0 0 0 0 0 0 1 1 1 1 1 1 1 1 1 1 1 1 1 1 1 1"/></feComponentTransfer><feComposite in="SourceGraphic" in2="m" operator="in"/></filter>
<filter id="n_E_39" filterUnits="userSpaceOnUse" x="311" y="161" width="996" height="535" color-interpolation-filters="sRGB"><feTurbulence type="fractalNoise" baseFrequency="0.15" numOctaves="2" seed="39" result="n"/><feColorMatrix in="n" type="matrix" values="0 0 0 0 0  0 0 0 0 0  0 0 0 0 0  1.6 0 0 0 -0.3" result="a"/><feComponentTransfer in="a" result="m"><feFuncA type="discrete" tableValues="0 0 0 0 0 0 0 0 0 0 0 0 0 0 0 0 0 0 0 0 0 0 0 0 0 0 0 1 1 1 1 1 1 1 1 1 1 1 1 1"/></feComponentTransfer><feComposite in="SourceGraphic" in2="m" operator="in"/></filter>
<filter id="n_W_19" filterUnits="userSpaceOnUse" x="311" y="161" width="996" height="535" color-interpolation-filters="sRGB"><feTurbulence type="fractalNoise" baseFrequency="0.12" numOctaves="2" seed="19" result="n"/><feColorMatrix in="n" type="matrix" values="0 0 0 0 0  0 0 0 0 0  0 0 0 0 0  1.6 0 0 0 -0.3" result="a"/><feComponentTransfer in="a" result="m"><feFuncA type="discrete" tableValues="0 0 0 0 0 0 0 0 0 0 0 0 0 0 0 0 0 0 0 0 0 0 0 1 1 1 1 1 1 1 1 1 1 1 1 1 1 1 1 1"/></feComponentTransfer><feComposite in="SourceGraphic" in2="m" operator="in"/></filter>
<filter id="n_W_20" filterUnits="userSpaceOnUse" x="311" y="161" width="996" height="535" color-interpolation-filters="sRGB"><feTurbulence type="fractalNoise" baseFrequency="0.25" numOctaves="2" seed="20" result="n"/><feColorMatrix in="n" type="matrix" values="0 0 0 0 0  0 0 0 0 0  0 0 0 0 0  1.6 0 0 0 -0.3" result="a"/><feComponentTransfer in="a" result="m"><feFuncA type="discrete" tableValues="0 0 0 0 0 0 0 0 0 0 0 0 0 0 0 0 0 0 0 0 0 0 0 0 0 0 0 0 0 1 1 1 1 1 1 1 1 1 1 1"/></feComponentTransfer><feComposite in="SourceGraphic" in2="m" operator="in"/></filter>
<filter id="n_W_21" filterUnits="userSpaceOnUse" x="311" y="161" width="996" height="535" color-interpolation-filters="sRGB"><feTurbulence type="fractalNoise" baseFrequency="0.5" numOctaves="2" seed="21" result="n"/><feColorMatrix in="n" type="matrix" values="0 0 0 0 0  0 0 0 0 0  0 0 0 0 0  1.6 0 0 0 -0.3" result="a"/><feComponentTransfer in="a" result="m"><feFuncA type="discrete" tableValues="0 0 0 0 0 0 0 0 0 0 0 0 0 0 0 0 0 0 0 0 0 0 0 0 0 0 0 0 0 0 0 0 0 0 1 1 1 1 1 1"/></feComponentTransfer><feComposite in="SourceGraphic" in2="m" operator="in"/></filter>
<filter id="n_B_22" filterUnits="userSpaceOnUse" x="311" y="161" width="996" height="535" color-interpolation-filters="sRGB"><feTurbulence type="fractalNoise" baseFrequency="0.15" numOctaves="2" seed="22" result="n"/><feColorMatrix in="n" type="matrix" values="0 0 0 0 0  0 0 0 0 0  0 0 0 0 0  1.6 0 0 0 -0.3" result="a"/><feComponentTransfer in="a" result="m"><feFuncA type="discrete" tableValues="0 0 0 0 0 0 0 0 0 0 0 0 0 0 0 0 0 0 0 0 0 0 0 0 0 0 1 1 1 1 1 1 1 1 1 1 1 1 1 1"/></feComponentTransfer><feComposite in="SourceGraphic" in2="m" operator="in"/></filter>
<filter id="n_B_23" filterUnits="userSpaceOnUse" x="311" y="161" width="996" height="535" color-interpolation-filters="sRGB"><feTurbulence type="fractalNoise" baseFrequency="0.3" numOctaves="2" seed="23" result="n"/><feColorMatrix in="n" type="matrix" values="0 0 0 0 0  0 0 0 0 0  0 0 0 0 0  1.6 0 0 0 -0.3" result="a"/><feComponentTransfer in="a" result="m"><feFuncA type="discrete" tableValues="0 0 0 0 0 0 0 0 0 0 0 0 0 0 0 0 0 0 0 0 0 0 0 0 0 0 0 0 0 0 0 0 1 1 1 1 1 1 1 1"/></feComponentTransfer><feComposite in="SourceGraphic" in2="m" operator="in"/></filter>
<filter id="n_B_24" filterUnits="userSpaceOnUse" x="311" y="161" width="996" height="535" color-interpolation-filters="sRGB"><feTurbulence type="fractalNoise" baseFrequency="0.3" numOctaves="2" seed="24" result="n"/><feColorMatrix in="n" type="matrix" values="0 0 0 0 0  0 0 0 0 0  0 0 0 0 0  1.6 0 0 0 -0.3" result="a"/><feComponentTransfer in="a" result="m"><feFuncA type="discrete" tableValues="0 0 0 0 0 0 0 0 0 0 0 0 0 0 0 0 0 0 0 0 0 0 0 0 0 0 0 0 0 0 0 0 0 1 1 1 1 1 1 1"/></feComponentTransfer><feComposite in="SourceGraphic" in2="m" operator="in"/></filter>
<filter id="n_U_51" filterUnits="userSpaceOnUse" x="311" y="161" width="996" height="535" color-interpolation-filters="sRGB"><feTurbulence type="fractalNoise" baseFrequency="0.1" numOctaves="2" seed="51" result="n"/><feColorMatrix in="n" type="matrix" values="0 0 0 0 0  0 0 0 0 0  0 0 0 0 0  1.6 0 0 0 -0.3" result="a"/><feComponentTransfer in="a" result="m"><feFuncA type="discrete" tableValues="0 0 0 0 0 0 0 0 0 0 0 0 0 0 0 0 0 0 0 0 0 0 1 1 1 1 1 1 1 1 1 1 1 1 1 1 1 1 1 1"/></feComponentTransfer><feComposite in="SourceGraphic" in2="m" operator="in"/></filter>
<filter id="n_U_52" filterUnits="userSpaceOnUse" x="311" y="161" width="996" height="535" color-interpolation-filters="sRGB"><feTurbulence type="fractalNoise" baseFrequency="0.15" numOctaves="2" seed="52" result="n"/><feColorMatrix in="n" type="matrix" values="0 0 0 0 0  0 0 0 0 0  0 0 0 0 0  1.6 0 0 0 -0.3" result="a"/><feComponentTransfer in="a" result="m"><feFuncA type="discrete" tableValues="0 0 0 0 0 0 0 0 0 0 0 0 0 0 0 0 0 0 0 0 0 0 0 0 0 0 0 1 1 1 1 1 1 1 1 1 1 1 1 1"/></feComponentTransfer><feComposite in="SourceGraphic" in2="m" operator="in"/></filter>
<filter id="n_P_27" filterUnits="userSpaceOnUse" x="311" y="161" width="996" height="535" color-interpolation-filters="sRGB"><feTurbulence type="fractalNoise" baseFrequency="0.15" numOctaves="2" seed="27" result="n"/><feColorMatrix in="n" type="matrix" values="0 0 0 0 0  0 0 0 0 0  0 0 0 0 0  1.6 0 0 0 -0.3" result="a"/><feComponentTransfer in="a" result="m"><feFuncA type="discrete" tableValues="0 0 0 0 0 0 0 0 0 0 0 0 0 0 0 0 0 0 0 0 0 0 0 0 0 0 1 1 1 1 1 1 1 1 1 1 1 1 1 1"/></feComponentTransfer><feComposite in="SourceGraphic" in2="m" operator="in"/></filter>
<filter id="n_X_49" filterUnits="userSpaceOnUse" x="311" y="161" width="996" height="535" color-interpolation-filters="sRGB"><feTurbulence type="fractalNoise" baseFrequency="0.1" numOctaves="2" seed="49" result="n"/><feColorMatrix in="n" type="matrix" values="0 0 0 0 0  0 0 0 0 0  0 0 0 0 0  1.6 0 0 0 -0.3" result="a"/><feComponentTransfer in="a" result="m"><feFuncA type="discrete" tableValues="0 0 0 0 0 0 0 0 0 0 0 0 0 0 0 0 0 0 0 0 0 0 0 1 1 1 1 1 1 1 1 1 1 1 1 1 1 1 1 1"/></feComponentTransfer><feComposite in="SourceGraphic" in2="m" operator="in"/></filter>
<filter id="n_X_50" filterUnits="userSpaceOnUse" x="311" y="161" width="996" height="535" color-interpolation-filters="sRGB"><feTurbulence type="fractalNoise" baseFrequency="0.2" numOctaves="2" seed="50" result="n"/><feColorMatrix in="n" type="matrix" values="0 0 0 0 0  0 0 0 0 0  0 0 0 0 0  1.6 0 0 0 -0.3" result="a"/><feComponentTransfer in="a" result="m"><feFuncA type="discrete" tableValues="0 0 0 0 0 0 0 0 0 0 0 0 0 0 0 0 0 0 0 0 0 0 0 0 0 0 0 0 0 0 1 1 1 1 1 1 1 1 1 1"/></feComponentTransfer><feComposite in="SourceGraphic" in2="m" operator="in"/></filter>
<filter id="n_R_40" filterUnits="userSpaceOnUse" x="311" y="161" width="996" height="535" color-interpolation-filters="sRGB"><feTurbulence type="fractalNoise" baseFrequency="0.08" numOctaves="2" seed="40" result="n"/><feColorMatrix in="n" type="matrix" values="0 0 0 0 0  0 0 0 0 0  0 0 0 0 0  1.6 0 0 0 -0.3" result="a"/><feComponentTransfer in="a" result="m"><feFuncA type="discrete" tableValues="0 0 0 0 0 0 0 0 0 0 0 0 0 0 0 0 0 0 0 0 0 0 0 0 0 0 1 1 1 1 1 1 1 1 1 1 1 1 1 1"/></feComponentTransfer><feComposite in="SourceGraphic" in2="m" operator="in"/></filter>
<filter id="n_R_41" filterUnits="userSpaceOnUse" x="311" y="161" width="996" height="535" color-interpolation-filters="sRGB"><feTurbulence type="fractalNoise" baseFrequency="0.12" numOctaves="2" seed="41" result="n"/><feColorMatrix in="n" type="matrix" values="0 0 0 0 0  0 0 0 0 0  0 0 0 0 0  1.6 0 0 0 -0.3" result="a"/><feComponentTransfer in="a" result="m"><feFuncA type="discrete" tableValues="0 0 0 0 0 0 0 0 0 0 0 0 0 0 0 0 0 0 0 0 0 0 0 0 0 0 0 0 0 0 1 1 1 1 1 1 1 1 1 1"/></feComponentTransfer><feComposite in="SourceGraphic" in2="m" operator="in"/></filter>
<filter id="n_R_42" filterUnits="userSpaceOnUse" x="311" y="161" width="996" height="535" color-interpolation-filters="sRGB"><feTurbulence type="fractalNoise" baseFrequency="0.2" numOctaves="2" seed="42" result="n"/><feColorMatrix in="n" type="matrix" values="0 0 0 0 0  0 0 0 0 0  0 0 0 0 0  1.6 0 0 0 -0.3" result="a"/><feComponentTransfer in="a" result="m"><feFuncA type="discrete" tableValues="0 0 0 0 0 0 0 0 0 0 0 0 0 0 0 0 0 0 0 0 0 0 0 0 0 0 0 0 0 0 0 0 1 1 1 1 1 1 1 1"/></feComponentTransfer><feComposite in="SourceGraphic" in2="m" operator="in"/></filter>
<filter id="n_Z_28" filterUnits="userSpaceOnUse" x="311" y="161" width="996" height="535" color-interpolation-filters="sRGB"><feTurbulence type="fractalNoise" baseFrequency="0.15" numOctaves="2" seed="28" result="n"/><feColorMatrix in="n" type="matrix" values="0 0 0 0 0  0 0 0 0 0  0 0 0 0 0  1.6 0 0 0 -0.3" result="a"/><feComponentTransfer in="a" result="m"><feFuncA type="discrete" tableValues="0 0 0 0 0 0 0 0 0 0 0 0 0 0 0 0 0 0 0 0 0 0 0 0 0 1 1 1 1 1 1 1 1 1 1 1 1 1 1 1"/></feComponentTransfer><feComposite in="SourceGraphic" in2="m" operator="in"/></filter>
<filter id="n_Z_29" filterUnits="userSpaceOnUse" x="311" y="161" width="996" height="535" color-interpolation-filters="sRGB"><feTurbulence type="fractalNoise" baseFrequency="0.2" numOctaves="2" seed="29" result="n"/><feColorMatrix in="n" type="matrix" values="0 0 0 0 0  0 0 0 0 0  0 0 0 0 0  1.6 0 0 0 -0.3" result="a"/><feComponentTransfer in="a" result="m"><feFuncA type="discrete" tableValues="0 0 0 0 0 0 0 0 0 0 0 0 0 0 0 0 0 0 0 0 0 0 0 0 0 0 0 0 1 1 1 1 1 1 1 1 1 1 1 1"/></feComponentTransfer><feComposite in="SourceGraphic" in2="m" operator="in"/></filter>
<filter id="n_Z_30" filterUnits="userSpaceOnUse" x="311" y="161" width="996" height="535" color-interpolation-filters="sRGB"><feTurbulence type="fractalNoise" baseFrequency="0.3" numOctaves="2" seed="30" result="n"/><feColorMatrix in="n" type="matrix" values="0 0 0 0 0  0 0 0 0 0  0 0 0 0 0  1.6 0 0 0 -0.3" result="a"/><feComponentTransfer in="a" result="m"><feFuncA type="discrete" tableValues="0 0 0 0 0 0 0 0 0 0 0 0 0 0 0 0 0 0 0 0 0 0 0 0 0 0 0 0 0 0 0 1 1 1 1 1 1 1 1 1"/></feComponentTransfer><feComposite in="SourceGraphic" in2="m" operator="in"/></filter>
<filter id="n_Z_48" filterUnits="userSpaceOnUse" x="311" y="161" width="996" height="535" color-interpolation-filters="sRGB"><feTurbulence type="fractalNoise" baseFrequency="0.3" numOctaves="2" seed="48" result="n"/><feColorMatrix in="n" type="matrix" values="0 0 0 0 0  0 0 0 0 0  0 0 0 0 0  1.6 0 0 0 -0.3" result="a"/><feComponentTransfer in="a" result="m"><feFuncA type="discrete" tableValues="0 0 0 0 0 0 0 0 0 0 0 0 0 0 0 0 0 0 0 0 0 0 0 0 0 0 0 0 0 0 0 1 1 1 1 1 1 1 1 1"/></feComponentTransfer><feComposite in="SourceGraphic" in2="m" operator="in"/></filter>
<filter id="n_V_44" filterUnits="userSpaceOnUse" x="311" y="161" width="996" height="535" color-interpolation-filters="sRGB"><feTurbulence type="fractalNoise" baseFrequency="0.2" numOctaves="2" seed="44" result="n"/><feColorMatrix in="n" type="matrix" values="0 0 0 0 0  0 0 0 0 0  0 0 0 0 0  1.6 0 0 0 -0.3" result="a"/><feComponentTransfer in="a" result="m"><feFuncA type="discrete" tableValues="0 0 0 0 0 0 0 0 0 0 0 0 0 0 0 0 0 0 0 0 0 0 0 0 1 1 1 1 1 1 1 1 1 1 1 1 1 1 1 1"/></feComponentTransfer><feComposite in="SourceGraphic" in2="m" operator="in"/></filter>
<filter id="n_V_45" filterUnits="userSpaceOnUse" x="311" y="161" width="996" height="535" color-interpolation-filters="sRGB"><feTurbulence type="fractalNoise" baseFrequency="0.22" numOctaves="2" seed="45" result="n"/><feColorMatrix in="n" type="matrix" values="0 0 0 0 0  0 0 0 0 0  0 0 0 0 0  1.6 0 0 0 -0.3" result="a"/><feComponentTransfer in="a" result="m"><feFuncA type="discrete" tableValues="0 0 0 0 0 0 0 0 0 0 0 0 0 0 0 0 0 0 0 0 0 0 0 1 1 1 1 1 1 1 1 1 1 1 1 1 1 1 1 1"/></feComponentTransfer><feComposite in="SourceGraphic" in2="m" operator="in"/></filter>
<filter id="n_V_46" filterUnits="userSpaceOnUse" x="311" y="161" width="996" height="535" color-interpolation-filters="sRGB"><feTurbulence type="fractalNoise" baseFrequency="0.3" numOctaves="2" seed="46" result="n"/><feColorMatrix in="n" type="matrix" values="0 0 0 0 0  0 0 0 0 0  0 0 0 0 0  1.6 0 0 0 -0.3" result="a"/><feComponentTransfer in="a" result="m"><feFuncA type="discrete" tableValues="0 0 0 0 0 0 0 0 0 0 0 0 0 0 0 0 0 0 0 0 0 0 0 0 0 0 0 0 0 0 1 1 1 1 1 1 1 1 1 1"/></feComponentTransfer><feComposite in="SourceGraphic" in2="m" operator="in"/></filter>
<filter id="n_V_47" filterUnits="userSpaceOnUse" x="311" y="161" width="996" height="535" color-interpolation-filters="sRGB"><feTurbulence type="fractalNoise" baseFrequency="0.3" numOctaves="2" seed="47" result="n"/><feColorMatrix in="n" type="matrix" values="0 0 0 0 0  0 0 0 0 0  0 0 0 0 0  1.6 0 0 0 -0.3" result="a"/><feComponentTransfer in="a" result="m"><feFuncA type="discrete" tableValues="0 0 0 0 0 0 0 0 0 0 0 0 0 0 0 0 0 0 0 0 0 0 0 0 0 0 0 0 1 1 1 1 1 1 1 1 1 1 1 1"/></feComponentTransfer><feComposite in="SourceGraphic" in2="m" operator="in"/></filter>
<filter id="n_I_31" filterUnits="userSpaceOnUse" x="311" y="161" width="996" height="535" color-interpolation-filters="sRGB"><feTurbulence type="fractalNoise" baseFrequency="0.25" numOctaves="2" seed="31" result="n"/><feColorMatrix in="n" type="matrix" values="0 0 0 0 0  0 0 0 0 0  0 0 0 0 0  1.6 0 0 0 -0.3" result="a"/><feComponentTransfer in="a" result="m"><feFuncA type="discrete" tableValues="0 0 0 0 0 0 0 0 0 0 0 0 0 0 0 0 0 0 0 0 0 0 0 0 1 1 1 1 1 1 1 1 1 1 1 1 1 1 1 1"/></feComponentTransfer><feComposite in="SourceGraphic" in2="m" operator="in"/></filter>
<filter id="n_I_32" filterUnits="userSpaceOnUse" x="311" y="161" width="996" height="535" color-interpolation-filters="sRGB"><feTurbulence type="fractalNoise" baseFrequency="0.2" numOctaves="2" seed="32" result="n"/><feColorMatrix in="n" type="matrix" values="0 0 0 0 0  0 0 0 0 0  0 0 0 0 0  1.6 0 0 0 -0.3" result="a"/><feComponentTransfer in="a" result="m"><feFuncA type="discrete" tableValues="0 0 0 0 0 0 0 0 0 0 0 0 0 0 0 0 0 0 0 0 0 0 1 1 1 1 1 1 1 1 1 1 1 1 1 1 1 1 1 1"/></feComponentTransfer><feComposite in="SourceGraphic" in2="m" operator="in"/></filter>
<filter id="n_I_33" filterUnits="userSpaceOnUse" x="311" y="161" width="996" height="535" color-interpolation-filters="sRGB"><feTurbulence type="fractalNoise" baseFrequency="0.3" numOctaves="2" seed="33" result="n"/><feColorMatrix in="n" type="matrix" values="0 0 0 0 0  0 0 0 0 0  0 0 0 0 0  1.6 0 0 0 -0.3" result="a"/><feComponentTransfer in="a" result="m"><feFuncA type="discrete" tableValues="0 0 0 0 0 0 0 0 0 0 0 0 0 0 0 0 0 0 0 0 0 0 0 0 0 0 0 0 0 0 1 1 1 1 1 1 1 1 1 1"/></feComponentTransfer><feComposite in="SourceGraphic" in2="m" operator="in"/></filter>
<filter id="n_I_43" filterUnits="userSpaceOnUse" x="311" y="161" width="996" height="535" color-interpolation-filters="sRGB"><feTurbulence type="fractalNoise" baseFrequency="0.4" numOctaves="2" seed="43" result="n"/><feColorMatrix in="n" type="matrix" values="0 0 0 0 0  0 0 0 0 0  0 0 0 0 0  1.6 0 0 0 -0.3" result="a"/><feComponentTransfer in="a" result="m"><feFuncA type="discrete" tableValues="0 0 0 0 0 0 0 0 0 0 0 0 0 0 0 0 0 0 0 0 0 0 0 0 0 0 0 0 0 0 0 0 0 0 0 1 1 1 1 1"/></feComponentTransfer><feComposite in="SourceGraphic" in2="m" operator="in"/></filter>
</defs>
<rect x="311" y="161" width="996" height="535" fill="#4b9fd5"/>
<g clip-path="url(#land)">
<g><rect x="580" y="161" width="727" height="535" fill="#d4c600"/><rect x="580" y="161" width="727" height="535" fill="#9fb03c" filter="url(#n_Y_8)"/><rect x="580" y="161" width="727" height="535" fill="#0a6a00" filter="url(#n_Y_9)"/><rect x="580" y="161" width="727" height="535" fill="#ffab00" filter="url(#n_Y_10)"/><rect x="580" y="161" width="727" height="535" fill="#8b4a05" filter="url(#n_Y_11)"/><rect x="580" y="161" width="727" height="535" fill="#1ee61e" filter="url(#n_Y_12)"/></g>
<g mask="url(#mC)"><rect x="580" y="161" width="727" height="535" fill="#fff6c4"/><rect x="580" y="161" width="727" height="535" fill="#ffab00" filter="url(#n_C_1)"/><rect x="580" y="161" width="727" height="535" fill="#4b9fd5" filter="url(#n_C_2)"/></g>
<g mask="url(#mQ)"><rect x="580" y="161" width="727" height="535" fill="#fff6c4"/><rect x="580" y="161" width="727" height="535" fill="#ffab00" filter="url(#n_Q_3)"/><rect x="580" y="161" width="727" height="535" fill="#fdcbb6" filter="url(#n_Q_34)"/></g>
<g mask="url(#mO)"><rect x="580" y="161" width="727" height="535" fill="#ffab00"/><rect x="580" y="161" width="727" height="535" fill="#fff6c4" filter="url(#n_O_4)"/><rect x="580" y="161" width="727" height="535" fill="#d4c600" filter="url(#n_O_5)"/></g>
<g mask="url(#mK)"><rect x="580" y="161" width="727" height="535" fill="#fff6c4"/><rect x="580" y="161" width="727" height="535" fill="#fdcbb6" filter="url(#n_K_25)"/><rect x="580" y="161" width="727" height="535" fill="#ffab00" filter="url(#n_K_26)"/></g>
<g mask="url(#mM)"><rect x="580" y="161" width="727" height="535" fill="#ffab00"/><rect x="580" y="161" width="727" height="535" fill="#d4c600" filter="url(#n_M_6)"/><rect x="580" y="161" width="727" height="535" fill="#9fb03c" filter="url(#n_M_7)"/></g>
<g mask="url(#mL)"><rect x="580" y="161" width="727" height="535" fill="#9fb03c"/><rect x="580" y="161" width="727" height="535" fill="#d4c600" filter="url(#n_L_16)"/><rect x="580" y="161" width="727" height="535" fill="#0a6a00" filter="url(#n_L_17)"/><rect x="580" y="161" width="727" height="535" fill="#8b4a05" filter="url(#n_L_18)"/></g>
<g mask="url(#mG)"><rect x="580" y="161" width="727" height="535" fill="#9fb03c"/><rect x="580" y="161" width="727" height="535" fill="#0a6a00" filter="url(#n_G_13)"/><rect x="580" y="161" width="727" height="535" fill="#1ee61e" filter="url(#n_G_14)"/><rect x="580" y="161" width="727" height="535" fill="#d4c600" filter="url(#n_G_15)"/></g>
<g mask="url(#mD)"><rect x="580" y="161" width="727" height="535" fill="#9fb03c"/><rect x="580" y="161" width="727" height="535" fill="#0a6a00" filter="url(#n_D_35)"/><rect x="580" y="161" width="727" height="535" fill="#1ee61e" filter="url(#n_D_36)"/><rect x="580" y="161" width="727" height="535" fill="#d4c600" filter="url(#n_D_37)"/></g>
<g mask="url(#mE)"><rect x="580" y="161" width="727" height="535" fill="#9fb03c"/><rect x="580" y="161" width="727" height="535" fill="#fff6c4" filter="url(#n_E_38)"/><rect x="580" y="161" width="727" height="535" fill="#d4c600" filter="url(#n_E_39)"/></g>
<g mask="url(#mW)"><rect x="580" y="161" width="727" height="535" fill="#ffab00"/><rect x="580" y="161" width="727" height="535" fill="#8b4a05" filter="url(#n_W_19)"/><rect x="580" y="161" width="727" height="535" fill="#fff6c4" filter="url(#n_W_20)"/><rect x="580" y="161" width="727" height="535" fill="#4b9fd5" filter="url(#n_W_21)"/></g>
<g mask="url(#mB)"><rect x="580" y="161" width="727" height="535" fill="#8b4a05"/><rect x="580" y="161" width="727" height="535" fill="#ffab00" filter="url(#n_B_22)"/><rect x="580" y="161" width="727" height="535" fill="#d4c600" filter="url(#n_B_23)"/><rect x="580" y="161" width="727" height="535" fill="#fff6c4" filter="url(#n_B_24)"/></g>
<g mask="url(#mU)"><rect x="580" y="161" width="727" height="535" fill="#d4c600"/><rect x="580" y="161" width="727" height="535" fill="#8b4a05" filter="url(#n_U_51)"/><rect x="580" y="161" width="727" height="535" fill="#9fb03c" filter="url(#n_U_52)"/></g>
<g mask="url(#mP)"><rect x="580" y="161" width="727" height="535" fill="#fdcbb6"/><rect x="580" y="161" width="727" height="535" fill="#fff6c4" filter="url(#n_P_27)"/></g>
<g mask="url(#mX)"><rect x="580" y="161" width="727" height="535" fill="#fff6c4"/><rect x="580" y="161" width="727" height="535" fill="#8b4a05" filter="url(#n_X_49)"/><rect x="580" y="161" width="727" height="535" fill="#ffab00" filter="url(#n_X_50)"/></g>
<g mask="url(#mR)"><rect x="580" y="161" width="727" height="535" fill="#8b4a05"/><rect x="580" y="161" width="727" height="535" fill="#fdcbb6" filter="url(#n_R_40)"/><rect x="580" y="161" width="727" height="535" fill="#fff6c4" filter="url(#n_R_41)"/><rect x="580" y="161" width="727" height="535" fill="#ffab00" filter="url(#n_R_42)"/></g>
<g mask="url(#mZ)"><rect x="580" y="161" width="727" height="535" fill="#8b4a05"/><rect x="580" y="161" width="727" height="535" fill="#fff6c4" filter="url(#n_Z_28)"/><rect x="580" y="161" width="727" height="535" fill="#d4c600" filter="url(#n_Z_29)"/><rect x="580" y="161" width="727" height="535" fill="#0a6a00" filter="url(#n_Z_30)"/><rect x="580" y="161" width="727" height="535" fill="#4b9fd5" filter="url(#n_Z_48)"/></g>
<g mask="url(#mV)"><rect x="580" y="161" width="727" height="535" fill="#9fb03c"/><rect x="580" y="161" width="727" height="535" fill="#fdcbb6" filter="url(#n_V_44)"/><rect x="580" y="161" width="727" height="535" fill="#4b9fd5" filter="url(#n_V_45)"/><rect x="580" y="161" width="727" height="535" fill="#8b4a05" filter="url(#n_V_46)"/><rect x="580" y="161" width="727" height="535" fill="#0a6a00" filter="url(#n_V_47)"/></g>
<g mask="url(#mI)"><rect x="580" y="161" width="727" height="535" fill="#0a6a00"/><rect x="580" y="161" width="727" height="535" fill="#9fb03c" filter="url(#n_I_31)"/><rect x="580" y="161" width="727" height="535" fill="#4b9fd5" filter="url(#n_I_32)"/><rect x="580" y="161" width="727" height="535" fill="#d4c600" filter="url(#n_I_33)"/><rect x="580" y="161" width="727" height="535" fill="#1ee61e" filter="url(#n_I_43)"/></g>
</g>
<path fill="#4b9fd5" d="M854,521 L866,516 884,512 906,507 907,512 886,518 868,524 856,526 Z M972,495 L980,478 990,470 996,476 992,488 1000,492 1004,500 990,505 978,506 Z"/>
</svg>
<div id="status" class="abs"></div>
<svg class="a" style="left:1587.6px;top:4.6px" width="66" height="22" viewBox="0 0 66 22"><defs><radialGradient id="wb" cx=".5" cy=".35" r=".6"><stop offset="0" stop-color="#86827a"/><stop offset="1" stop-color="#5e5b54"/></radialGradient><radialGradient id="wc" cx=".5" cy=".35" r=".6"><stop offset="0" stop-color="#f58a5a"/><stop offset="1" stop-color="#d9531e"/></radialGradient></defs><circle cx="9" cy="11" r="8.6" fill="url(#wb)" stroke="#34322e" stroke-width="1"/><path d="M5.3,11.5H12.7" stroke="#2e2c28" stroke-width="1.4"/><circle cx="30.4" cy="11" r="8.6" fill="url(#wb)" stroke="#34322e" stroke-width="1"/><rect x="26.9" y="7.5" width="7" height="7" fill="none" stroke="#2e2c28" stroke-width="1.3"/><circle cx="51.8" cy="11" r="8.6" fill="url(#wc)" stroke="#34322e" stroke-width="1"/><path d="M48.8,8L54.8,14M54.8,8L48.8,14" stroke="#2a1a10" stroke-width="1.3"/></svg>
<svg class="a" style="left:6px;top:66px" width="4" height="18"><rect x="0" y="0" width="1" height="1" fill="#9a978f"/><rect x="0" y="3" width="1" height="1" fill="#9a978f"/><rect x="0" y="6" width="1" height="1" fill="#9a978f"/><rect x="0" y="9" width="1" height="1" fill="#9a978f"/><rect x="0" y="12" width="1" height="1" fill="#9a978f"/><rect x="0" y="15" width="1" height="1" fill="#9a978f"/><rect x="3" y="0" width="1" height="1" fill="#9a978f"/><rect x="3" y="3" width="1" height="1" fill="#9a978f"/><rect x="3" y="6" width="1" height="1" fill="#9a978f"/><rect x="3" y="9" width="1" height="1" fill="#9a978f"/><rect x="3" y="12" width="1" height="1" fill="#9a978f"/><rect x="3" y="15" width="1" height="1" fill="#9a978f"/></svg>
<svg class="a" style="left:232px;top:66px" width="4" height="18"><rect x="0" y="0" width="1" height="1" fill="#9a978f"/><rect x="0" y="3" width="1" height="1" fill="#9a978f"/><rect x="0" y="6" width="1" height="1" fill="#9a978f"/><rect x="0" y="9" width="1" height="1" fill="#9a978f"/><rect x="0" y="12" width="1" height="1" fill="#9a978f"/><rect x="0" y="15" width="1" height="1" fill="#9a978f"/><rect x="3" y="0" width="1" height="1" fill="#9a978f"/><rect x="3" y="3" width="1" height="1" fill="#9a978f"/><rect x="3" y="6" width="1" height="1" fill="#9a978f"/><rect x="3" y="9" width="1" height="1" fill="#9a978f"/><rect x="3" y="12" width="1" height="1" fill="#9a978f"/><rect x="3" y="15" width="1" height="1" fill="#9a978f"/></svg>
<svg class="a" style="left:739px;top:66px" width="4" height="18"><rect x="0" y="0" width="1" height="1" fill="#9a978f"/><rect x="0" y="3" width="1" height="1" fill="#9a978f"/><rect x="0" y="6" width="1" height="1" fill="#9a978f"/><rect x="0" y="9" width="1" height="1" fill="#9a978f"/><rect x="0" y="12" width="1" height="1" fill="#9a978f"/><rect x="0" y="15" width="1" height="1" fill="#9a978f"/><rect x="3" y="0" width="1" height="1" fill="#9a978f"/><rect x="3" y="3" width="1" height="1" fill="#9a978f"/><rect x="3" y="6" width="1" height="1" fill="#9a978f"/><rect x="3" y="9" width="1" height="1" fill="#9a978f"/><rect x="3" y="12" width="1" height="1" fill="#9a978f"/><rect x="3" y="15" width="1" height="1" fill="#9a978f"/></svg>
<svg class="a" style="left:1238px;top:66px" width="4" height="18"><rect x="0" y="0" width="1" height="1" fill="#9a978f"/><rect x="0" y="3" width="1" height="1" fill="#9a978f"/><rect x="0" y="6" width="1" height="1" fill="#9a978f"/><rect x="0" y="9" width="1" height="1" fill="#9a978f"/><rect x="0" y="12" width="1" height="1" fill="#9a978f"/><rect x="0" y="15" width="1" height="1" fill="#9a978f"/><rect x="3" y="0" width="1" height="1" fill="#9a978f"/><rect x="3" y="3" width="1" height="1" fill="#9a978f"/><rect x="3" y="6" width="1" height="1" fill="#9a978f"/><rect x="3" y="9" width="1" height="1" fill="#9a978f"/><rect x="3" y="12" width="1" height="1" fill="#9a978f"/><rect x="3" y="15" width="1" height="1" fill="#9a978f"/></svg>
<div class="a" style="left:1029px;top:59px;width:34px;height:33px;background:#dcdad5;border:1px solid #bdbab4;border-radius:3px"></div>
<div class="a" style="left:1182px;top:59px;width:34px;height:33px;background:#dcdad5;border:1px solid #bdbab4;border-radius:3px 0 0 3px"></div>
<div class="a" style="left:1217px;top:59px;width:11px;height:33px;background:#dcdad5;border:1px solid #bdbab4;border-radius:0 3px 3px 0"></div>
<svg class="a" style="left:20px;top:63px" width="24" height="24" viewBox="0 0 24 24"><path d="M3.5,1.5 H13 L19.5,8 V22.5 H3.5 Z" fill="#fff" stroke="#6b6b6b" stroke-width="1"/><path d="M13,1.5 V8 H19.5" fill="#e8e8e8" stroke="#6b6b6b" stroke-width="1"/></svg>
<svg class="a" style="left:54px;top:63px" width="24" height="24" viewBox="0 0 24 24"><path d="M1.5,4.5 H9 L11,7 H20.5 V9 H22.5 L20.5,20.5 H2.5 Z" fill="#fcd955" stroke="#c9a72a" stroke-width="1"/><path d="M4.5,10 H23 L20.5,20.5 H2.5 Z" fill="#fde068" stroke="#c9a72a" stroke-width="1"/></svg>
<svg class="a" style="left:89px;top:63px" width="24" height="24" viewBox="0 0 24 24"><rect x="2" y="1.5" width="20.5" height="21" rx="2" fill="#5b8fd0" stroke="#3a6aa8"/><rect x="5.5" y="2.5" width="13.5" height="8" fill="#f8f8f8"/><path d="M7,4.8H17.5M7,6.8H17.5M7,8.8H17.5" stroke="#6a6a6a" stroke-width=".65"/><rect x="6" y="14" width="12.5" height="7.5" fill="#f2f2f2"/><rect x="7.5" y="15.5" width="3" height="4.5" fill="#2d4f7a"/></svg>
<svg class="a" style="left:124px;top:63px" width="24" height="24" viewBox="0 0 24 24"><path d="M5,2.5 H15 L20.5,8 V21 H5 Z" fill="#fff" stroke="#777"/><rect x="5" y="9" width="14" height="10" fill="none" stroke="#8fb2e8" stroke-width=".8"/><path d="M2.5,1.5 H13 V6 H7 V22.5 H2.5 Z" fill="#f1cf3e" stroke="#c9a020" stroke-width=".8"/><path d="M3.5,9H5.5M3.5,12H5.5M3.5,15H5.5M3.5,18H5.5M9,2.5V4.5M11,2.5V4.5" stroke="#c9a020" stroke-width=".7"/><rect x="13.5" y="13.5" width="10" height="10" rx="1" fill="#c9a020"/><circle cx="18.5" cy="18.5" r="2.5" fill="none" stroke="#fff" stroke-width="1.3"/><path d="M18.5,14.8V22.2M14.8,18.5H22.2M15.9,15.9L21.1,21.1M21.1,15.9L15.9,21.1" stroke="#fff" stroke-width=".9"/></svg>
<svg class="a" style="left:159px;top:63px" width="24" height="24" viewBox="0 0 24 24"><path d="M2.5,2.5 H16 L21.5,8 V21.5 H2.5 Z" fill="#fff" stroke="#777"/><rect x="4.5" y="5" width="15" height="14.5" fill="none" stroke="#8fb2e8" stroke-width=".8"/><path d="M10,11 L19,20" stroke="#b48e2a" stroke-width="3.8" stroke-linecap="round"/><path d="M10,11 L19,20" stroke="#f2cf55" stroke-width="2.4" stroke-linecap="round"/><path d="M7,7.5 A4,4 0 1 0 12.5,12.5" fill="none" stroke="#aaa" stroke-width="2.2"/></svg>
<svg class="a" style="left:193px;top:63px" width="24" height="24" viewBox="0 0 24 24"><circle cx="6" cy="6" r="4.2" fill="#d9602a"/><path d="M13,10 L20.5,3" stroke="#3d6fb8" stroke-width="2.5" stroke-linecap="round"/><rect x="2" y="13" width="8.5" height="9" fill="#7fb07f" stroke="#5c8f5c" stroke-width=".8"/><text x="13" y="21.5" font-family="Liberation Sans" font-size="11" fill="#444">a</text></svg>
<svg class="a" style="left:246px;top:63px" width="24" height="24" viewBox="0 0 24 24"><path d="M8,22 C6,19 3.5,14.5 3,12.5 C2.6,11 4.3,10.3 5.3,11.5 L7.5,14 V4.5 C7.5,2.5 10,2.5 10,4.5 V11 V2.5 C10,0.5 12.5,0.5 12.5,2.5 V11 V3.5 C12.5,1.5 15,1.5 15,3.5 V11 V5 C15,3 17.5,3 17.5,5 V15 C17.5,18 16.5,20 15.5,22 Z" fill="#fff" stroke="#1a1a1a" stroke-width="1.1" stroke-linejoin="round"/></svg>
<svg class="a" style="left:280px;top:63px" width="24" height="24" viewBox="0 0 24 24"><rect x="4" y="4" width="14" height="14" fill="#f7e04a" stroke="#c9a72a" stroke-width=".8"/><path d="M11,0.5 L15,5 H7Z M11,23.5 L15,19 H7Z M0.5,12 L5,8 V16Z M23.5,12 L19,8 V16Z" fill="#5b8fd0" stroke="#3a6aa8" stroke-width=".6"/><path d="M11,4V20M3,12H19" stroke="#5b8fd0" stroke-width="2.5"/></svg>
<svg class="a" style="left:315px;top:63px" width="24" height="24" viewBox="0 0 24 24"><path d="M2.5,21.5 L8,16" stroke="#1a1a1a" stroke-width="3.2" stroke-linecap="round"/><path d="M2.5,21.5 L8,16" stroke="#f1c232" stroke-width="1.8" stroke-linecap="round"/><circle cx="14.5" cy="9.5" r="7.5" fill="#eee" stroke="#666" stroke-width="1.2"/><path d="M14.5,5.2V13.8M10.2,9.5H18.8" stroke="#4a80c8" stroke-width="2.2"/></svg>
<svg class="a" style="left:350px;top:63px" width="24" height="24" viewBox="0 0 24 24"><path d="M2.5,21.5 L8,16" stroke="#1a1a1a" stroke-width="3.2" stroke-linecap="round"/><path d="M2.5,21.5 L8,16" stroke="#f1c232" stroke-width="1.8" stroke-linecap="round"/><circle cx="14.5" cy="9.5" r="7.5" fill="#eee" stroke="#666" stroke-width="1.2"/><path d="M10.2,9.5H18.8" stroke="#4a80c8" stroke-width="2.2"/></svg>
<svg class="a" style="left:385px;top:63px" width="24" height="24" viewBox="0 0 24 24"><path d="M4,1 H10 L8,3 L11,6 L9,8 L6,5 L4,7Z M24,1 H18 L20,3 L17,6 L19,8 L22,5 L24,7Z M24,23 H18 L20,21 L17,18 L19,16 L22,19 L24,17Z M4,23 H10 L8,21 L11,18 L9,16 L6,19 L4,17Z" fill="#5b8fd0" stroke="#3a6aa8" stroke-width=".5"/><path d="M2.5,21.5 L8,16" stroke="#1a1a1a" stroke-width="3.2" stroke-linecap="round"/><path d="M2.5,21.5 L8,16" stroke="#f1c232" stroke-width="1.8" stroke-linecap="round"/><circle cx="14.5" cy="9.5" r="7.5" fill="#e6e6e6" stroke="#666" stroke-width="1.2"/></svg>
<svg class="a" style="left:421px;top:63px" width="24" height="24" viewBox="0 0 24 24"><rect x="2" y="3" width="8" height="12" fill="#f7e04a" stroke="#b8a020" stroke-width=".8"/><path d="M2.5,21.5 L8,16" stroke="#1a1a1a" stroke-width="3.2" stroke-linecap="round"/><path d="M2.5,21.5 L8,16" stroke="#f1c232" stroke-width="1.8" stroke-linecap="round"/><circle cx="14.5" cy="9.5" r="7.5" fill="#e8e8e8" stroke="#666" stroke-width="1.2"/><path d="M14.5,2 V17" stroke="#ccc" stroke-width=".6"/><path d="M14.5,2 A7.5,7.5 0 0 0 14.5,17Z" fill="#f5f0c8" opacity=".8"/></svg>
<svg class="a" style="left:455px;top:63px" width="24" height="24" viewBox="0 0 24 24"><rect x="2" y="3" width="8" height="12" fill="#eee" stroke="#999" stroke-width=".8"/><path d="M2.5,21.5 L8,16" stroke="#1a1a1a" stroke-width="3.2" stroke-linecap="round"/><path d="M2.5,21.5 L8,16" stroke="#f1c232" stroke-width="1.8" stroke-linecap="round"/><circle cx="14.5" cy="9.5" r="7.5" fill="#e8e8e8" stroke="#666" stroke-width="1.2"/><path d="M14.5,2 V17" stroke="#bbb" stroke-width=".6"/></svg>
<svg class="a" style="left:490px;top:63px" width="24" height="24" viewBox="0 0 24 24"><path d="M2.5,21.5 L8,16" stroke="#bbb" stroke-width="3.2" stroke-linecap="round"/><path d="M2.5,21.5 L8,16" stroke="#c8c3b8" stroke-width="1.8" stroke-linecap="round"/><circle cx="14.5" cy="9.5" r="7.5" fill="#f3f2ef" stroke="#d0cdc7" stroke-width="1.2"/><text x="9.5" y="12.5" font-family="Liberation Sans" font-weight="bold" font-size="8" fill="#ccc">1:1</text><rect x="1" y="3" width="6" height="10" fill="none" stroke="#d0cdc7" stroke-width=".8"/></svg>
<svg class="a" style="left:526px;top:63px" width="24" height="24" viewBox="0 0 24 24"><path d="M2.5,21.5 L8,16" stroke="#bbb" stroke-width="3.2" stroke-linecap="round"/><path d="M2.5,21.5 L8,16" stroke="#c8c3b8" stroke-width="1.8" stroke-linecap="round"/><circle cx="14.5" cy="9.5" r="7.5" fill="#f3f2ef" stroke="#d0cdc7" stroke-width="1.2"/><rect x="12" y="12" width="10" height="10" fill="#dcdad5"/><path d="M20,14 L15,17 L20,20" stroke="#f3f2ef" stroke-width="1.5" fill="none"/></svg>
<svg class="a" style="left:560px;top:63px" width="24" height="24" viewBox="0 0 24 24"><path d="M2.5,21.5 L8,16" stroke="#bbb" stroke-width="3.2" stroke-linecap="round"/><path d="M2.5,21.5 L8,16" stroke="#c8c3b8" stroke-width="1.8" stroke-linecap="round"/><circle cx="14.5" cy="9.5" r="7.5" fill="#f3f2ef" stroke="#d0cdc7" stroke-width="1.2"/><rect x="12" y="12" width="10" height="10" fill="#dcdad5"/><path d="M15,14 L20,17 L15,20" stroke="#f3f2ef" stroke-width="1.5" fill="none"/></svg>
<svg class="a" style="left:595px;top:63px" width="24" height="24" viewBox="0 0 24 24"><path d="M4,3 H20 V21 H4 Z" fill="#e6e6e6" stroke="#999" stroke-width=".9"/><path d="M2,3 V20 A2,2 0 0 0 4,22 V4 A1.5,1.5 0 0 0 2,3" fill="#ddd" stroke="#999" stroke-width=".8"/><rect x="13.5" y="13.5" width="10" height="10" rx="1" fill="#c9a020"/><circle cx="18.5" cy="18.5" r="2.2" fill="none" stroke="#fff" stroke-width="1.2"/><path d="M18.5,15V22M15,18.5H22M16,16L21,21M21,16L16,21" stroke="#fff" stroke-width=".9"/></svg>
<svg class="a" style="left:630px;top:63px" width="24" height="24" viewBox="0 0 24 24"><path d="M4,2 H13 V22 L8.5,17 L4,20Z" fill="#6a9ad6" stroke="#2d4f7a" stroke-width=".9"/><rect x="13.5" y="13.5" width="10" height="10" rx="1" fill="#c9a020"/><circle cx="18.5" cy="18.5" r="2.2" fill="none" stroke="#fff" stroke-width="1.2"/><path d="M18.5,15V22M15,18.5H22M16,16L21,21M21,16L16,21" stroke="#fff" stroke-width=".9"/></svg>
<svg class="a" style="left:665px;top:63px" width="24" height="24" viewBox="0 0 24 24"><path d="M4,3 H20 V21 H4 Z" fill="#e6e6e6" stroke="#999" stroke-width=".9"/><path d="M2,3 V20 A2,2 0 0 0 4,22 V4 A1.5,1.5 0 0 0 2,3" fill="#ddd" stroke="#999" stroke-width=".8"/><path d="M13,2 H17 V10 L15,8 L13,10Z" fill="#6a9ad6" stroke="#2d4f7a" stroke-width=".6"/></svg>
<svg class="a" style="left:699px;top:63px" width="24" height="24" viewBox="0 0 24 24"><path d="M3,11 A9,8 0 0 1 19,6 L21,3 V11 H13 L16,8.5 A5.5,5 0 0 0 7,11 Z" fill="#4f8ad6" stroke="#3a6aa8" stroke-width=".5"/><path d="M21,13 A9,8 0 0 1 5,18 L3,21 V13 H11 L8,15.5 A5.5,5 0 0 0 17,13 Z" fill="#4f8ad6" stroke="#3a6aa8" stroke-width=".5"/></svg>
<svg class="a" style="left:751px;top:63px" width="24" height="24" viewBox="0 0 24 24"><circle cx="9" cy="9" r="8" fill="#5b8fd0" stroke="#3f70b0" stroke-width=".8"/><text x="6.5" y="14" font-family="Liberation Serif" font-style="italic" font-weight="bold" font-size="12" fill="#fff">i</text><path d="M12,11 L12,22 L14.5,19.5 L17,23.5 L19,22.5 L16.7,18.5 L20,18.5 Z" fill="#fff" stroke="#222" stroke-width=".9" stroke-linejoin="round"/></svg>
<svg class="a" style="left:790px;top:63px" width="24" height="24" viewBox="0 0 24 24"><circle cx="10" cy="10" r="7" fill="none" stroke="#d4d1cb" stroke-width="2.5" stroke-dasharray="2.5 1.5"/><circle cx="10" cy="10" r="4" fill="#e0ded9" stroke="#d4d1cb"/><path d="M9,8 L12,10 L9,12Z" fill="#f5f4f2"/><path d="M13,13 L13,22 L15,20 L17,23 L18.5,22 L16.5,19 L19.5,19 Z" fill="#f5f4f2" stroke="#d4d1cb" stroke-width=".9"/></svg>
<svg class="a" style="left:834px;top:63px" width="24" height="24" viewBox="0 0 24 24"><rect x="1.5" y="1.5" width="21" height="21" fill="#e6e6e6" stroke="#222" stroke-width="1" stroke-dasharray="2 1.3"/><rect x="2" y="2" width="13" height="13" fill="#f7e04a" stroke="#c9a72a" stroke-width=".8"/><path d="M11,8 L11,21 L14,18 L17,23 L19,22 L16.5,17.5 L20.5,17.5 Z" fill="#fff" stroke="#222" stroke-width=".9" stroke-linejoin="round"/></svg>
<svg class="a" style="left:882px;top:63px" width="24" height="24" viewBox="0 0 24 24"><rect x="9" y="9" width="13" height="13" fill="#f7e04a" stroke="#c9a72a" stroke-width=".8"/><rect x="2" y="2" width="14" height="13" fill="#e6e6e6" stroke="#888" stroke-width=".8"/><rect x="4" y="4.5" width="10" height="3" fill="#fff" stroke="#777" stroke-width=".6"/><rect x="4" y="9.5" width="10" height="3" fill="#fff" stroke="#777" stroke-width=".6"/></svg>
<svg class="a" style="left:930px;top:63px" width="24" height="24" viewBox="0 0 24 24"><rect x="2" y="2" width="14" height="14" fill="#f7e04a" stroke="#c9a72a" stroke-width=".8"/><rect x="13" y="13" width="10" height="10" rx="2" fill="#d42828"/><circle cx="18" cy="18" r="3" fill="none" stroke="#fff" stroke-width="1"/><path d="M16,20L20,16" stroke="#fff" stroke-width="1"/></svg>
<svg class="a" style="left:965px;top:63px" width="24" height="24" viewBox="0 0 24 24"><rect x="2" y="2.5" width="20" height="19" fill="#fff" stroke="#5b8fd0" stroke-width="1"/><rect x="2.5" y="3" width="19" height="3" fill="#b9d0ee"/><path d="M4,4.5H7M9,4.5H20" stroke="#5b8fd0" stroke-width="1.6"/><path d="M4,9.5H7M9,9.5H20M4,12.5H7M9,12.5H20M4,15.5H7M9,15.5H20M4,18.5H7M9,18.5H20" stroke="#5b8fd0" stroke-width="1.2"/></svg>
<svg class="a" style="left:1000px;top:63px" width="24" height="24" viewBox="0 0 24 24"><path d="M2,22 H22 M2.5,2 V22 M21.5,2 V22" stroke="#555" stroke-width="1.2"/><path d="M3,6H21M3,12H21M3,18H21" stroke="#888" stroke-width=".6"/><path d="M6,6 l2,-2 2,2 -2,2z M14,6 l2,-2 2,2 -2,2z" fill="#fff" stroke="#d43c3c" stroke-width="1"/><path d="M5,12 l2,-2 2,2 -2,2z M10,12 l2,-2 2,2 -2,2z" fill="#fff" stroke="#5aaa5a" stroke-width="1"/><path d="M4,18 l2,-2 2,2 -2,2z M9,18 l2,-2 2,2 -2,2z M14,18 l2,-2 2,2 -2,2z" fill="#fff" stroke="#4a80c8" stroke-width="1"/></svg>
<svg class="a" style="left:1069px;top:63px" width="24" height="24" viewBox="0 0 24 24"><path d="M4,2.5 H19.5 L20,7 H18.5 L17.5,5.5 H9 L14.5,12 L8.5,19 H18 L19.5,17 H20.5 L19.5,22 H3.5 V21 L10.5,12.5 L4,4 Z" fill="#a21ba8"/></svg>
<svg class="a" style="left:1104px;top:63px" width="24" height="24" viewBox="0 0 24 24"><path d="M3,3 V8 M21,3 V8 M3,5.5 H21" stroke="#2d4f7a" stroke-width="1.5"/><rect x="2" y="11" width="20" height="8" rx="1" fill="#ccc" stroke="#555" stroke-width="1"/><path d="M5,11 V14 M8,11 V13 M11,11 V15 M14,11 V13 M17,11 V14 M20,11 V13" stroke="#555" stroke-width=".8"/></svg>
<svg class="a" style="left:1151px;top:63px" width="24" height="24" viewBox="0 0 24 24"><path d="M4,2.5 H20 A3,3 0 0 1 23,5.5 V10 A3,3 0 0 1 20,13 H12 L8,18 V13 H4 A3,3 0 0 1 1,10 V5.5 A3,3 0 0 1 4,2.5Z" fill="#fbe98a" stroke="#c9a72a" stroke-width=".9"/><circle cx="7" cy="19" r="3.2" fill="#6fa86f" stroke="#3f6f3f" stroke-width=".8"/></svg>
<svg class="a" style="left:1252px;top:63px" width="24" height="24" viewBox="0 0 24 24"><rect x="3" y="1.5" width="18" height="21" fill="#6897cb" stroke="#2a3a4a" stroke-width="1"/><rect x="3" y="1.5" width="4" height="21" fill="#2c3e50"/><text x="10" y="15" font-family="Liberation Sans" font-size="11" fill="#fff">?</text></svg>
<svg class="a" style="left:1034px;top:63px" width="24" height="24" viewBox="0 0 24 24"><polygon points="22.95,10.92 22.95,13.08 19.37,14.24 18.79,15.63 20.50,18.98 18.98,20.50 15.63,18.79 14.24,19.37 13.08,22.95 10.92,22.95 9.76,19.37 8.37,18.79 5.02,20.50 3.50,18.98 5.21,15.63 4.63,14.24 1.05,13.08 1.05,10.92 4.63,9.76 5.21,8.37 3.50,5.02 5.02,3.50 8.37,5.21 9.76,4.63 10.92,1.05 13.08,1.05 14.24,4.63 15.63,5.21 18.98,3.50 20.50,5.02 18.79,8.37 19.37,9.76" fill="#8ab0e6" stroke="#4a7ac0" stroke-width=".8"/><circle cx="12" cy="12" r="3.08" fill="#eee" stroke="#4a7ac0" stroke-width=".8"/></svg>
<svg class="a" style="left:1187px;top:63px" width="24" height="24" viewBox="0 0 24 24"><path d="M3,2.5 H21 V15.5 H10 L5,21 L6.5,15.5 H3Z" fill="#e8f0f4" stroke="#888" stroke-width=".9"/><text x="7.5" y="13.5" font-family="Liberation Serif" font-size="13" fill="#333">T</text></svg>
<svg class="a" style="left:816px;top:72px" width="11" height="7" viewBox="0 0 11 7"><path d="M0.5,0.5 H10.5 L5.5,6Z" fill="#d0cdc7"/></svg>
<svg class="a" style="left:864px;top:72px" width="11" height="7" viewBox="0 0 11 7"><path d="M0.5,0.5 H10.5 L5.5,6Z" fill="#222"/></svg>
<svg class="a" style="left:911.5px;top:72px" width="11" height="7" viewBox="0 0 11 7"><path d="M0.5,0.5 H10.5 L5.5,6Z" fill="#222"/></svg>
<svg class="a" style="left:1134.6px;top:72px" width="11" height="7" viewBox="0 0 11 7"><path d="M0.5,0.5 H10.5 L5.5,6Z" fill="#222"/></svg>
<svg class="a" style="left:1217px;top:72px" width="11" height="7" viewBox="0 0 11 7"><path d="M0.5,0.5 H10.5 L5.5,6Z" fill="#222"/></svg>
<svg class="a" style="left:6px;top:108px" width="4" height="18"><rect x="0" y="0" width="1" height="1" fill="#9a978f"/><rect x="0" y="3" width="1" height="1" fill="#9a978f"/><rect x="0" y="6" width="1" height="1" fill="#9a978f"/><rect x="0" y="9" width="1" height="1" fill="#9a978f"/><rect x="0" y="12" width="1" height="1" fill="#9a978f"/><rect x="0" y="15" width="1" height="1" fill="#9a978f"/><rect x="3" y="0" width="1" height="1" fill="#9a978f"/><rect x="3" y="3" width="1" height="1" fill="#9a978f"/><rect x="3" y="6" width="1" height="1" fill="#9a978f"/><rect x="3" y="9" width="1" height="1" fill="#9a978f"/><rect x="3" y="12" width="1" height="1" fill="#9a978f"/><rect x="3" y="15" width="1" height="1" fill="#9a978f"/></svg>
<svg class="a" style="left:455px;top:108px" width="4" height="18"><rect x="0" y="0" width="1" height="1" fill="#9a978f"/><rect x="0" y="3" width="1" height="1" fill="#9a978f"/><rect x="0" y="6" width="1" height="1" fill="#9a978f"/><rect x="0" y="9" width="1" height="1" fill="#9a978f"/><rect x="0" y="12" width="1" height="1" fill="#9a978f"/><rect x="0" y="15" width="1" height="1" fill="#9a978f"/><rect x="3" y="0" width="1" height="1" fill="#9a978f"/><rect x="3" y="3" width="1" height="1" fill="#9a978f"/><rect x="3" y="6" width="1" height="1" fill="#9a978f"/><rect x="3" y="9" width="1" height="1" fill="#9a978f"/><rect x="3" y="12" width="1" height="1" fill="#9a978f"/><rect x="3" y="15" width="1" height="1" fill="#9a978f"/></svg>
<svg class="a" style="left:802px;top:108px" width="4" height="18"><rect x="0" y="0" width="1" height="1" fill="#9a978f"/><rect x="0" y="3" width="1" height="1" fill="#9a978f"/><rect x="0" y="6" width="1" height="1" fill="#9a978f"/><rect x="0" y="9" width="1" height="1" fill="#9a978f"/><rect x="0" y="12" width="1" height="1" fill="#9a978f"/><rect x="0" y="15" width="1" height="1" fill="#9a978f"/><rect x="3" y="0" width="1" height="1" fill="#9a978f"/><rect x="3" y="3" width="1" height="1" fill="#9a978f"/><rect x="3" y="6" width="1" height="1" fill="#9a978f"/><rect x="3" y="9" width="1" height="1" fill="#9a978f"/><rect x="3" y="12" width="1" height="1" fill="#9a978f"/><rect x="3" y="15" width="1" height="1" fill="#9a978f"/></svg>
<svg class="a" style="left:20px;top:104px" width="24" height="24" viewBox="0 0 24 24"><g opacity=".55"><path d="M2,21 L4,14 L14,2 L18,5 L8,17Z" fill="#d4cfc5" stroke="#bdb8ae" stroke-width=".7"/><path d="M6,22 L8,15 L18,3 L22,6 L12,18Z" fill="#ddd8cf" stroke="#bdb8ae" stroke-width=".7"/></g><path d="M18,21 L22,21 L20,23Z" fill="#bbb"/></svg>
<svg class="a" style="left:55px;top:104px" width="24" height="24" viewBox="0 0 24 24"><path d="M3,23 L4.5,16 L16,2 L21,6 L9.5,20Z" fill="#ead43a" stroke="#6f6420" stroke-width=".9"/><path d="M4.5,16 L9.5,20 L3,23Z" fill="#ddd" stroke="#555" stroke-width=".8"/><path d="M3,23 L4,20 L6,21.5Z" fill="#333"/><path d="M14.5,4 L19.5,8" stroke="#fff" stroke-width="1.2"/><path d="M7,17 L17.5,4.5" stroke="#fff" stroke-width=".6" opacity=".7"/></svg>
<svg class="a" style="left:89px;top:104px" width="24" height="24" viewBox="0 0 24 24"><rect x="2" y="2" width="19" height="19" rx="2" fill="#e0ddd8" stroke="#d0cdc7"/><rect x="5" y="3.5" width="13" height="7" fill="#f2f1ef"/><rect x="5.5" y="13.5" width="11" height="6.5" fill="#f2f1ef"/><path d="M12,22 L14,17 L21,8 L23,10 L16,19Z" fill="#e3ddd5" stroke="#d0c8be" stroke-width=".7"/></svg>
<svg class="a" style="left:124px;top:104px" width="24" height="24" viewBox="0 0 24 24"><circle cx="12" cy="4" r="3" fill="#e3e1dc" stroke="#d5d2cc" stroke-width=".7"/><circle cx="20" cy="7" r="2.5" fill="#e3e1dc" stroke="#d5d2cc" stroke-width=".7"/><circle cx="4" cy="12" r="2.8" fill="#e3e1dc" stroke="#d5d2cc" stroke-width=".7"/><rect x="13" y="13" width="10" height="10" rx="1" fill="#d9d6cf"/><circle cx="18" cy="18" r="2.2" fill="none" stroke="#fff" stroke-width="1.2"/><path d="M18,14.5V21.5M14.5,18H21.5M15.5,15.5L20.5,20.5M20.5,15.5L15.5,20.5" stroke="#fff" stroke-width=".9"/></svg>
<svg class="a" style="left:159px;top:104px" width="24" height="24" viewBox="0 0 24 24"><path d="M2,22 L6,4 M6,4 H20" stroke="#d0cdc7" stroke-width=".8"/><rect x="4" y="2" width="4" height="4" fill="#f5f4f2" stroke="#c8c5bf" stroke-width=".7"/><path d="M8,10 L20,22 M20,10 L9,21" stroke="#d9d5ce" stroke-width="3"/></svg>
<svg class="a" style="left:207px;top:104px" width="24" height="24" viewBox="0 0 24 24"><rect x="2" y="4" width="19" height="5" fill="#e3e0d8" stroke="#d5d2ca" stroke-width=".7"/><rect x="2" y="11" width="19" height="5" fill="#e3e0d8" stroke="#d5d2ca" stroke-width=".7"/><rect x="2" y="18" width="19" height="5" fill="#e3e0d8" stroke="#d5d2ca" stroke-width=".7"/><path d="M12,23 L14,18 L21,3 L23,4 L16,20Z" fill="#ebe6e0" stroke="#d5cfc8" stroke-width=".7"/></svg>
<svg class="a" style="left:242px;top:104px" width="24" height="24" viewBox="0 0 24 24"><rect x="1" y="3" width="16" height="14" fill="#ebe9e5" stroke="#dcd9d3" stroke-width=".7"/><path d="M6,6 H22 M8,6 L9,23 H19 L20,6" fill="#f0e6e6" stroke="#d8c9c9" stroke-width="1.2"/><path d="M11,9V21M14,9V21M17,9V21" stroke="#d8c9c9" stroke-width="1"/></svg>
<svg class="a" style="left:276px;top:104px" width="24" height="24" viewBox="0 0 24 24"><path d="M1,7 L22,15 M1,9 L22,8" stroke="#d6d3ce" stroke-width="2"/><circle cx="19" cy="7" r="3" fill="none" stroke="#d6cccc" stroke-width="1.5"/><circle cx="19" cy="17" r="3" fill="none" stroke="#d6cccc" stroke-width="1.5"/></svg>
<svg class="a" style="left:311px;top:104px" width="24" height="24" viewBox="0 0 24 24"><path d="M9,2 H17 L20,5 V17 H9Z" fill="#f5f4f2" stroke="#d5d2cc" stroke-width=".8"/><path d="M3,6 H11 L14,9 V22 H3Z" fill="#f5f4f2" stroke="#d0cdc7" stroke-width=".8"/><path d="M5,12H12M5,14.5H12M5,17H12M5,19.5H12" stroke="#dcd9d3" stroke-width=".8"/></svg>
<svg class="a" style="left:346px;top:104px" width="24" height="24" viewBox="0 0 24 24"><rect x="3" y="2.5" width="17" height="20" fill="#efedea" stroke="#d5d2cc" stroke-width=".9"/><rect x="8" y="1" width="7" height="3" fill="#e0ddd8"/><path d="M5,6 H16 L18,8 V20 H5Z" fill="#f8f7f5" stroke="#d5d2cc" stroke-width=".7"/><path d="M7,11H16M7,13.5H16M7,16H16" stroke="#dcd9d3" stroke-width=".8"/></svg>
<svg class="a" style="left:381px;top:104px" width="24" height="24" viewBox="0 0 24 24"><path d="M1,11 L8,3 V8 C16,8 21,11 20,19 C18,14 14,13 8,14 V19Z" fill="#dcd6d0"/></svg>
<svg class="a" style="left:416px;top:104px" width="24" height="24" viewBox="0 0 24 24"><path d="M23,11 L16,3 V8 C8,8 3,11 4,19 C6,14 10,13 16,14 V19Z" fill="#d9dbd6"/></svg>
<svg class="a" style="left:466px;top:104px" width="24" height="24" viewBox="0 0 24 24"><path d="M5,6 H23 V17 H5 L1,11.5 Z" fill="#f3d634" stroke="#b39a10" stroke-width=".9"/><text x="6.5" y="14.7" font-family="Liberation Sans" font-weight="bold" font-size="9" fill="#222" textLength="14.5" lengthAdjust="spacingAndGlyphs">abc</text></svg>
<svg class="a" style="left:503px;top:104px" width="24" height="24" viewBox="0 0 24 24"><path d="M10,11 L10,2 A9,9 0 0 1 18,7Z" fill="#d63a2a"/><path d="M10,11 L18,7 A9,9 0 0 1 10,20Z" fill="#b82020"/><path d="M10,11 L10,20 A9,9 0 0 1 2,8Z" fill="#1e9a3a"/><path d="M10,11 L2,8 A9,9 0 0 1 10,2Z" fill="#f0c020"/><rect x="13" y="16" width="3" height="7" fill="#e8c020"/><rect x="17" y="12" width="3" height="11" fill="#1e9a3a"/><rect x="20.5" y="18" width="3" height="5" fill="#d63a2a"/></svg>
<svg class="a" style="left:545px;top:104px" width="24" height="24" viewBox="0 0 24 24"><path d="M5,3 H20 V14 H5 L1,8.5 Z" fill="#c8dcf6" stroke="#5b8fd0" stroke-width=".9"/><text x="6.5" y="11.7" font-family="Liberation Sans" font-weight="bold" font-size="9" fill="#222" textLength="11.5" lengthAdjust="spacingAndGlyphs">ab</text><path d="M16,9 V17" stroke="#f0f0f0" stroke-width="2.2"/><circle cx="16.5" cy="19.5" r="4" fill="#b82a2a"/><circle cx="15.3" cy="18.3" r="1.2" fill="#e06060"/></svg>
<svg class="a" style="left:578px;top:104px" width="24" height="24" viewBox="0 0 24 24"><path d="M5,4 H23 V15 H5 L1,9.5 Z" fill="#fff" stroke="#e02020" stroke-width=".9"/><text x="6.5" y="12.7" font-family="Liberation Sans" font-weight="bold" font-size="9" fill="#e02020" textLength="14.5" lengthAdjust="spacingAndGlyphs">abc</text></svg>
<svg class="a" style="left:622px;top:104px" width="24" height="24" viewBox="0 0 24 24"><path d="M5,3 H20 V14 H5 L1,8.5 Z" fill="#f3d634" stroke="#b39a10" stroke-width=".9"/><text x="6.5" y="11.7" font-family="Liberation Sans" font-weight="bold" font-size="9" fill="#222" textLength="11.5" lengthAdjust="spacingAndGlyphs">ab</text><path d="M16,9 V17" stroke="#f0f0f0" stroke-width="2.2"/><circle cx="16.5" cy="19.5" r="4" fill="#b82a2a"/><circle cx="15.3" cy="18.3" r="1.2" fill="#e06060"/></svg>
<svg class="a" style="left:657px;top:104px" width="24" height="24" viewBox="0 0 24 24"><path d="M5,3 H23 V14 H5 L1,8.5 Z" fill="#f3d634" stroke="#b39a10" stroke-width=".9"/><text x="6.5" y="11.7" font-family="Liberation Sans" font-weight="bold" font-size="9" fill="#222" textLength="14.5" lengthAdjust="spacingAndGlyphs">abc</text><path d="M6,19 C10,14.5 16,14.5 21,19 C16,23.5 10,23.5 6,19Z" fill="#fff" stroke="#555" stroke-width=".8"/><circle cx="13.5" cy="19" r="2.6" fill="#5b8fd0"/><circle cx="13.5" cy="19" r="1.1" fill="#111"/></svg>
<svg class="a" style="left:692px;top:104px" width="24" height="24" viewBox="0 0 24 24"><path d="M5,3 H23 V14 H5 L1,8.5 Z" fill="#f3d634" stroke="#b39a10" stroke-width=".9"/><text x="6.5" y="11.7" font-family="Liberation Sans" font-weight="bold" font-size="9" fill="#222" textLength="14.5" lengthAdjust="spacingAndGlyphs">abc</text><rect x="13" y="13.5" width="10.5" height="10" rx="1.5" fill="#35506e"/><path d="M15,17.5 H19 V15.5 L22,18.5 L19,21.5 V19.5 H15Z" fill="#fff"/></svg>
<svg class="a" style="left:727px;top:104px" width="24" height="24" viewBox="0 0 24 24"><path d="M5,3 H23 V14 H5 L1,8.5 Z" fill="#f3d634" stroke="#b39a10" stroke-width=".9"/><text x="6.5" y="11.7" font-family="Liberation Sans" font-weight="bold" font-size="9" fill="#222" textLength="14.5" lengthAdjust="spacingAndGlyphs">abc</text><rect x="13" y="13.5" width="10.5" height="10" rx="1.5" fill="#35506e"/><path d="M20.5,18.5 A2.8,2.8 0 1 1 18,15.7" fill="none" stroke="#fff" stroke-width="1.4"/><path d="M17,14 L19.5,15.7 L17,17.5Z" fill="#fff"/></svg>
<svg class="a" style="left:762px;top:104px" width="24" height="24" viewBox="0 0 24 24"><path d="M5,3 H23 V14 H5 L1,8.5 Z" fill="#f3d634" stroke="#b39a10" stroke-width=".9"/><text x="6.5" y="11.7" font-family="Liberation Sans" font-weight="bold" font-size="9" fill="#222" textLength="14.5" lengthAdjust="spacingAndGlyphs">abc</text><rect x="13" y="13.5" width="10.5" height="10" rx="1.5" fill="#c9a020"/><path d="M15,21.5 L21.5,15.5" stroke="#fff" stroke-width="1.6"/></svg>
<svg class="a" style="left:815px;top:104px" width="24" height="24" viewBox="0 0 24 24"><path d="M11.5,1.5 C6,1.5 6.5,4 6.5,4 V6.5 H12 V7.5 H4 C4,7.5 1,7.2 1,12.5 C1,17.8 3.7,17.5 3.7,17.5 H5.5 V15 C5.5,15 5.4,12.2 8.3,12.2 H13 C13,12.2 15.8,12.3 15.8,9.5 V4.3 C15.8,4.3 16.2,1.5 11.5,1.5Z" fill="#3b74b0"/><circle cx="9" cy="4" r=".9" fill="#fff"/><path d="M12.5,22.5 C18,22.5 17.5,20 17.5,20 V17.5 H12 V16.5 H20 C20,16.5 23,16.8 23,11.5 C23,6.2 20.3,6.5 20.3,6.5 H18.5 V9 C18.5,9 18.6,11.8 15.7,11.8 H11 C11,11.8 8.2,11.7 8.2,14.5 V19.7 C8.2,19.7 7.8,22.5 12.5,22.5Z" fill="#f5cf3e"/><path d="M17,18 L22,20 L17,22" stroke="#333" stroke-width="1.1" fill="none"/></svg>
<svg class="a" style="left:188px;top:115px" width="11" height="7" viewBox="0 0 11 7"><path d="M0.5,0.5 H10.5 L5.5,6Z" fill="#d5d2cc"/></svg>
<div class="a" style="left:537px;top:106px;width:1px;height:22px;background:#d4d1cb"></div>
<div class="a" style="left:613px;top:106px;width:1px;height:22px;background:#d4d1cb"></div>
<svg class="a" style="left:22px;top:145px" width="12" height="4"><rect x="0" y="0" width="1" height="1" fill="#9a978f"/><rect x="0" y="3" width="1" height="1" fill="#9a978f"/><rect x="3" y="0" width="1" height="1" fill="#9a978f"/><rect x="3" y="3" width="1" height="1" fill="#9a978f"/><rect x="6" y="0" width="1" height="1" fill="#9a978f"/><rect x="6" y="3" width="1" height="1" fill="#9a978f"/><rect x="9" y="0" width="1" height="1" fill="#9a978f"/><rect x="9" y="3" width="1" height="1" fill="#9a978f"/></svg>
<svg class="a" style="left:9px;top:155px" width="24" height="24" viewBox="0 0 24 24"><path d="M1,9 L10,5 L14,16 L5,20Z" fill="#e07030" stroke="#a04a1a" stroke-width=".6"/><path d="M4,6 L13,3 L16,14 L7,17Z" fill="#f1cf3e" stroke="#b09020" stroke-width=".6"/><path d="M8,3 L19,1 L21,12 L10,14Z" fill="#5b8fd0" stroke="#2d5a9a" stroke-width=".7"/><rect x="15" y="15" width="9" height="9" rx="1.5" fill="#4a9a4a"/><path d="M17,19.5H22M19.5,17V22" stroke="#fff" stroke-width="1.6"/></svg>
<svg class="a" style="left:9px;top:189px" width="24" height="24" viewBox="0 0 24 24"><path d="M1,9 L11,13 V23 L1,19Z" fill="#d9b020" stroke="#4a3a10" stroke-width=".8"/><path d="M11,13 L22,9 V19 L11,23Z" fill="#fbe970" stroke="#4a3a10" stroke-width=".8"/><circle cx="11.5" cy="8" r="7" fill="#8ab0e0" stroke="#3a5a8a" stroke-width=".8"/><path d="M8,4 L11,6 L9.5,9 L13,8 L14,4.5" stroke="#2a4a7a" stroke-width="1.4" fill="none"/><rect x="14" y="14" width="10" height="10" rx="1" fill="#c9a020"/><circle cx="19" cy="19" r="2.2" fill="none" stroke="#fff" stroke-width="1.2"/><path d="M19,15.5V22.5M15.5,19H22.5M16.5,16.5L21.5,21.5M21.5,16.5L16.5,21.5" stroke="#fff" stroke-width=".9"/></svg>
<svg class="a" style="left:9px;top:222px" width="24" height="24" viewBox="0 0 24 24"><path d="M2,3 L9,20 L19,5" fill="none" stroke="#333" stroke-width="1.1"/><circle cx="2.5" cy="3.5" r="2" fill="#fff" stroke="#333"/><circle cx="9" cy="20" r="2" fill="#fff" stroke="#333"/><circle cx="19" cy="5" r="2" fill="#fff" stroke="#333"/><path d="M19,5 L13,5" stroke="#333" stroke-width="1.1"/><circle cx="13" cy="5" r="2" fill="#fff" stroke="#333"/><rect x="14" y="14" width="10" height="10" rx="1" fill="#c9a020"/><circle cx="19" cy="19" r="2.2" fill="none" stroke="#fff" stroke-width="1.2"/><path d="M19,15.5V22.5M15.5,19H22.5M16.5,16.5L21.5,21.5M21.5,16.5L16.5,21.5" stroke="#fff" stroke-width=".9"/></svg>
<svg class="a" style="left:9px;top:256px" width="24" height="24" viewBox="0 0 24 24"><path d="M1,23 C4,14 12,4 23,1 C20,9 14,16 5,19 Z" fill="#9ab8df" stroke="#3a5a8a" stroke-width=".8"/><path d="M1,23 L18,6" stroke="#3a5a8a" stroke-width=".8"/><rect x="14" y="14" width="10" height="10" rx="1" fill="#c9a020"/><circle cx="19" cy="19" r="2.2" fill="none" stroke="#fff" stroke-width="1.2"/><path d="M19,15.5V22.5M15.5,19H22.5M16.5,16.5L21.5,21.5M21.5,16.5L16.5,21.5" stroke="#fff" stroke-width=".9"/></svg>
<svg class="a" style="left:9px;top:290px" width="24" height="24" viewBox="0 0 24 24"><rect x="2" y="7" width="18" height="10" rx="1" fill="#6a9ad6" stroke="#2d4f7a" stroke-width=".8"/><path d="M5,3V7M8,3V7M11,3V7M14,3V7M17,3V7M5,17V21M8,17V21M11,17V21M14,17V21" stroke="#2d4f7a" stroke-width="1"/><rect x="14" y="14" width="10" height="10" rx="1" fill="#c9a020"/><circle cx="19" cy="19" r="2.2" fill="none" stroke="#fff" stroke-width="1.2"/><path d="M19,15.5V22.5M15.5,19H22.5M16.5,16.5L21.5,21.5M21.5,16.5L16.5,21.5" stroke="#fff" stroke-width=".9"/></svg>
<svg class="a" style="left:9px;top:333px" width="24" height="24" viewBox="0 0 24 24"><rect x="2" y="4" width="18" height="18" rx="2" fill="#6a9ad6" stroke="#2d4f7a" stroke-width=".8"/><rect x="14" y="14" width="10" height="10" rx="1" fill="#c9a020"/><circle cx="19" cy="19" r="2.2" fill="none" stroke="#fff" stroke-width="1.2"/><path d="M19,15.5V22.5M15.5,19H22.5M16.5,16.5L21.5,21.5M21.5,16.5L16.5,21.5" stroke="#fff" stroke-width=".9"/></svg>
<svg class="a" style="left:251px;top:142px" width="12" height="12" viewBox="0 0 12 12"><rect x=".5" y=".5" width="11" height="11" rx="2" fill="none" stroke="#777" stroke-width="1"/><rect x="4.5" y="2.5" width="5" height="5" fill="none" stroke="#555" stroke-width="1"/><rect x="2.5" y="4.5" width="5" height="5" fill="#eee" stroke="#555" stroke-width="1"/></svg>
<svg class="a" style="left:266px;top:142px" width="12" height="12" viewBox="0 0 12 12"><rect x=".5" y=".5" width="11" height="11" rx="2" fill="none" stroke="#777" stroke-width="1"/><path d="M3,3 L9,9 M9,3 L3,9" stroke="#444" stroke-width="1.8"/></svg>
<svg class="a" style="left:51px;top:166px" width="16" height="16" viewBox="0 0 16 16"><rect x="1.5" y="1.5" width="11" height="11" fill="#eee" stroke="#777" stroke-width=".9"/><rect x="9" y="10" width="6" height="5" rx="1.5" fill="#6fbf6f" stroke="#3f8f3f" stroke-width=".7"/></svg>
<svg class="a" style="left:78px;top:166px" width="16" height="16" viewBox="0 0 16 16"><path d="M2,7.5 A6,5.5 0 0 1 13,4 L14,2 V8 H8.5 L10.5,6 A3.6,3.2 0 0 0 4.5,7.5 Z" fill="#4f8ad6"/><path d="M14,8.5 A6,5.5 0 0 1 3,12 L2,14 V8 H7.5 L5.5,10 A3.6,3.2 0 0 0 11.5,8.5 Z" fill="#4f8ad6"/></svg>
<svg class="a" style="left:105px;top:166px" width="16" height="16" viewBox="0 0 16 16"><path d="M1,2 H15 V4 L9.5,9 V15 L6.5,13.5 V9 L1,4Z" fill="#5b8fd0" stroke="#3a6aa8" stroke-width=".6"/><rect x="1" y="1.5" width="14" height="2" fill="#f1d84a"/></svg>
<svg class="a" style="left:131px;top:166px" width="16" height="16" viewBox="0 0 16 16"><path d="M1,2 H6 M2,2 V14 M2,8 H5 M2,13 H5" stroke="#999" stroke-width=".8"/><rect x="5" y="6.5" width="3" height="3" fill="#f59a20"/><rect x="5" y="11.5" width="3" height="3" fill="#f59a20"/><path d="M11.5,14 V6 M8,8 L11.5,3 L15,8" stroke="#4a80c8" stroke-width="2.4" fill="none"/></svg>
<svg class="a" style="left:158px;top:166px" width="16" height="16" viewBox="0 0 16 16"><circle cx="8" cy="8" r="7" fill="#5b8fd0" stroke="#3a6aa8" stroke-width=".6"/><text x="5.8" y="12.5" font-family="Liberation Serif" font-style="italic" font-weight="bold" font-size="10" fill="#fff">i</text></svg>
<div class="a" style="left:42px;top:191px;width:237px;height:190px;background:#fff;border:1px solid #b3afa8"></div>
<div class="a" style="left:264px;top:192px;width:14px;height:188px;background:#f3f2f0;border-left:1px solid #c8c5bf"></div>
<div class="a" style="left:265px;top:206px;width:13px;height:80px;background:linear-gradient(90deg,#fdfdfc,#eeedea);border:1px solid #c9c6c0"></div>
<div class="a" style="left:265px;top:287px;width:13px;height:79px;background:#dddbd6"></div>
<svg class="a" style="left:266px;top:196px" width="10" height="6"><path d="M1,5.5H9L5,1Z" fill="#555"/></svg>
<svg class="a" style="left:266px;top:371px" width="10" height="6"><path d="M1,0.5H9L5,4.5Z" fill="#555"/></svg>
<svg class="a" style="left:51px;top:196.5px" width="7" height="10"><path d="M0.5,0.5 L6,5 L0.5,9.5Z" fill="#3a3a3a"/></svg>
<svg class="a" style="left:68px;top:193px" width="17" height="17" viewBox="0 0 16 16"><path d="M8,0.8 L10.1,5.6 L15.3,6 L11.3,9.4 L12.6,14.6 L8,11.8 L3.4,14.6 L4.7,9.4 L0.7,6 L5.9,5.6Z" fill="#fbe75a" stroke="#d9b520" stroke-width=".9"/></svg>
<svg class="a" style="left:51px;top:216.6px" width="7" height="10"><path d="M0.5,0.5 L6,5 L0.5,9.5Z" fill="#3a3a3a"/></svg>
<svg class="a" style="left:68px;top:213.1px" width="17" height="17" viewBox="0 0 16 16"><rect x="1" y="2" width="14" height="13" fill="#b5e07a" stroke="#6a9a3a" stroke-width=".8"/><path d="M1,4 L15,14" stroke="#e8f5d0" stroke-width="1.5"/><path d="M8,3 H13 L11,6 L9,9Z" fill="#1e8a1e"/></svg>
<svg class="a" style="left:51px;top:236.7px" width="7" height="10"><path d="M0.5,0.5 L6,5 L0.5,9.5Z" fill="#3a3a3a"/></svg>
<svg class="a" style="left:68px;top:233.2px" width="17" height="17" viewBox="0 0 16 16"><path d="M3,2 H14 V15 H3Z" fill="#e8e8e8" stroke="#aaa" stroke-width=".8"/><path d="M1.5,2 V14 A1.5,1.5 0 0 0 3,15.5 V3 A1,1 0 0 0 1.5,2" fill="#ddd" stroke="#aaa" stroke-width=".7"/><path d="M8,0.5 H11 V7 L9.5,5.5 L8,7Z" fill="#6a9ad6"/></svg>
<svg class="a" style="left:51px;top:256.8px" width="7" height="10"><path d="M0.5,0.5 L6,5 L0.5,9.5Z" fill="#3a3a3a"/></svg>
<svg class="a" style="left:68px;top:253.3px" width="17" height="17" viewBox="0 0 16 16"><path d="M1,2 H6 L7.5,4 H15 V15 H1Z" fill="#f5f5f5" stroke="#666" stroke-width=".8"/><path d="M4.5,12.5 V9.5 L8,6.5 L11.5,9.5 V12.5Z" fill="none" stroke="#222" stroke-width=".9"/></svg>
<svg class="a" style="left:51px;top:276.9px" width="7" height="10"><path d="M0.5,0.5 L6,5 L0.5,9.5Z" fill="#3a3a3a"/></svg>
<svg class="a" style="left:68px;top:273.4px" width="17" height="17" viewBox="0 0 16 16"><path d="M1,2 H6 L7.5,4 H15 V15 H1Z" fill="#f0f0f0" stroke="#777" stroke-width=".8"/><path d="M7.5,4 H15" stroke="#555" stroke-width="1"/></svg>
<svg class="a" style="left:68px;top:293.5px" width="17" height="17" viewBox="0 0 16 16"><path d="M1,6 L8,9 V15.5 L1,12.5Z" fill="#e0b820" stroke="#8a6a10" stroke-width=".6"/><path d="M8,9 L15,6 V12.5 L8,15.5Z" fill="#fbe970" stroke="#8a6a10" stroke-width=".6"/><circle cx="8" cy="5" r="4.5" fill="#8ab0e0" stroke="#4a6a9a" stroke-width=".6"/><path d="M6,2.5 L8,4 L7,6 L9.5,5 L10,3" stroke="#eef" stroke-width="1" fill="none"/></svg>
<svg class="a" style="left:68px;top:313.6px" width="17" height="17" viewBox="0 0 16 16"><path d="M1,15 C3,9 8,3 15,1 C13,6 9,11 3,13 Z" fill="#9ab8df" stroke="#4a6a9a" stroke-width=".7"/><path d="M1,15 L12,4" stroke="#4a6a9a" stroke-width=".6"/></svg>
<svg class="a" style="left:68px;top:333.7px" width="17" height="17" viewBox="0 0 16 16"><path d="M3,1.5 C0.5,2 0.5,6 1.5,9 C2.5,11 3.5,10 4,9 C4,12 5,15 7,15.5 C8,15 7.5,12 8,10.5 C9,10.5 10,10 10.5,11.5 C11.5,12 12.5,11 12,10 C14,9 15.5,6 15,3.5 C14.5,1 11,0.5 9,1.5 C7,0.5 5,0.5 3,1.5Z" fill="#5f8fc9" stroke="#2f5f99" stroke-width=".7"/><path d="M6,4 C6,7 7,9 8,10.5 M11,4 C10,6 11,8 12,10" stroke="#cfe0f5" stroke-width=".7" fill="none"/></svg>
<svg class="a" style="left:68px;top:353.8px" width="17" height="17" viewBox="0 0 16 16"><path d="M1,1 C6,1 13,3 15.5,7.5 L8,9.5 C5,11 2.5,13.5 1,15.5 C3,11 3,5 1,1Z" fill="#6a9ad6" stroke="#3a6aa8" stroke-width=".6"/><path d="M4,2.5 C5,6 5,10 3.5,13 M7,3 C8,6 8,9 7,11 M10,4.5 C11,6 11,8 10.5,9" stroke="#d0e0f5" stroke-width=".7" fill="none"/></svg>
<svg class="a" style="left:68px;top:373.9px" width="17" height="17" viewBox="0 0 16 16"><rect x="1" y="1" width="14" height="14" rx="2" fill="#6a9ad6"/><path d="M3,5H13" stroke="#cfe0f5" stroke-width="1" stroke-dasharray="2 1"/></svg>
<div class="a" style="left:42px;top:381px;width:244px;height:9px;background:#edebe7"></div>
<div class="a" style="left:42px;top:380px;width:222px;height:1px;background:#b3afa8"></div>
<svg class="a" style="left:155px;top:383px" width="18" height="4"><rect x="0" y="0" width="1" height="1" fill="#9a978f"/><rect x="0" y="3" width="1" height="1" fill="#9a978f"/><rect x="3" y="0" width="1" height="1" fill="#9a978f"/><rect x="3" y="3" width="1" height="1" fill="#9a978f"/><rect x="6" y="0" width="1" height="1" fill="#9a978f"/><rect x="6" y="3" width="1" height="1" fill="#9a978f"/><rect x="9" y="0" width="1" height="1" fill="#9a978f"/><rect x="9" y="3" width="1" height="1" fill="#9a978f"/><rect x="12" y="0" width="1" height="1" fill="#9a978f"/><rect x="12" y="3" width="1" height="1" fill="#9a978f"/><rect x="15" y="0" width="1" height="1" fill="#9a978f"/><rect x="15" y="3" width="1" height="1" fill="#9a978f"/></svg>
<svg class="a" style="left:251px;top:392px" width="12" height="12" viewBox="0 0 12 12"><rect x=".5" y=".5" width="11" height="11" rx="2" fill="none" stroke="#777" stroke-width="1"/><rect x="4.5" y="2.5" width="5" height="5" fill="none" stroke="#555" stroke-width="1"/><rect x="2.5" y="4.5" width="5" height="5" fill="#eee" stroke="#555" stroke-width="1"/></svg>
<svg class="a" style="left:266px;top:392px" width="12" height="12" viewBox="0 0 12 12"><rect x=".5" y=".5" width="11" height="11" rx="2" fill="none" stroke="#777" stroke-width="1"/><path d="M3,3 L9,9 M9,3 L3,9" stroke="#444" stroke-width="1.8"/></svg>
<svg class="a" style="left:52px;top:415px" width="16" height="16" viewBox="0 0 16 16"><path d="M9,9 L15,2" stroke="#c8962a" stroke-width="2.2" stroke-linecap="round"/><path d="M1,12 C2,8 5,7 9,9 C9,12 7,14 3,14Z" fill="#e8c020"/><path d="M1,12 L5,13 L3,14Z" fill="#d43c3c"/><path d="M2,10 L8,11" stroke="#2a6ad0" stroke-width="1.2"/></svg>
<svg class="a" style="left:78px;top:415px" width="16" height="16" viewBox="0 0 16 16"><rect x="3" y="3" width="9" height="11" fill="#f2f2f2" stroke="#555" stroke-width=".8"/><rect x="5" y="1" width="9" height="11" fill="#f8f8f8" stroke="#555" stroke-width=".8"/><path d="M8,3 V9" stroke="#3a6aa8" stroke-width="1.5"/><circle cx="12" cy="12.5" r="3" fill="#6fbf6f" stroke="#3f8f3f" stroke-width=".6"/><path d="M10.5,12.5H13.5M12,11V14" stroke="#fff" stroke-width=".9"/></svg>
<svg class="a" style="left:105px;top:415px" width="16" height="16" viewBox="0 0 16 16"><path d="M0.5,8 C4,3 12,3 15.5,8 C12,13 4,13 0.5,8Z" fill="#eee" stroke="#777" stroke-width=".8"/><circle cx="8" cy="7.5" r="3.2" fill="#5b8fd0"/><circle cx="8" cy="7.5" r="1.2" fill="#111"/><path d="M11,13 L15,13 L13,15Z" fill="#333"/></svg>
<svg class="a" style="left:131px;top:415px" width="16" height="16" viewBox="0 0 16 16"><path d="M1,2 H15 V4 L9.5,9 V15 L6.5,13.5 V9 L1,4Z" fill="#5b8fd0" stroke="#3a6aa8" stroke-width=".6"/><rect x="1" y="1.5" width="14" height="2" fill="#f1d84a"/></svg>
<svg class="a" style="left:158px;top:415px" width="16" height="16" viewBox="0 0 16 16"><text x="1" y="11" font-family="Liberation Serif" font-size="13" fill="#6a3a9a">ε</text><rect x="9" y="9" width="6" height="6" rx="1" fill="#aaa"/><path d="M10.5,10.5V14M13,10.5V14" stroke="#ddd" stroke-width=".8"/></svg>
<svg class="a" style="left:197px;top:415px" width="16" height="16" viewBox="0 0 16 16"><path d="M1,2 H6 M2,2 V14 M2,8 H5 M2,13 H5" stroke="#999" stroke-width=".8"/><rect x="5" y="6.5" width="3" height="3" fill="#f59a20"/><rect x="5" y="11.5" width="3" height="3" fill="#f59a20"/><path d="M11.5,2 V10 M8,8 L11.5,13 L15,8" stroke="#4a80c8" stroke-width="2.4" fill="none"/></svg>
<svg class="a" style="left:224px;top:415px" width="16" height="16" viewBox="0 0 16 16"><path d="M1,2 H6 M2,2 V14 M2,8 H5 M2,13 H5" stroke="#999" stroke-width=".8"/><rect x="5" y="6.5" width="3" height="3" fill="#f59a20"/><rect x="5" y="11.5" width="3" height="3" fill="#f59a20"/><path d="M11.5,14 V6 M8,8 L11.5,3 L15,8" stroke="#4a80c8" stroke-width="2.4" fill="none"/></svg>
<svg class="a" style="left:250px;top:415px" width="16" height="16" viewBox="0 0 16 16"><rect x="1.5" y="1.5" width="11" height="11" fill="#fff" stroke="#555" stroke-width=".9"/><rect x="9" y="11" width="7" height="4" rx="1.5" fill="#e03030"/><path d="M10.5,13H14.5" stroke="#fff" stroke-width="1"/></svg>
<svg class="a" style="left:178px;top:420px" width="11" height="7" viewBox="0 0 11 7"><path d="M0.5,0.5 H10.5 L5.5,6Z" fill="#333"/></svg>
<div class="a" style="left:42px;top:441px;width:237px;height:278px;background:#fff;border:1px solid #b3afa8"></div>
<div class="a" style="left:43px;top:442px;width:235px;height:19.5px;background:#308cc6"></div>
<div class="a" style="left:273px;top:444px;width:4px;height:16px;background:#e8f1f8"></div>
<div class="a" style="left:273px;top:463.1px;width:4px;height:16px;background:#eeeeec"></div>
<div class="a" style="left:273px;top:482.2px;width:4px;height:16px;background:#eeeeec"></div>
<div class="a" style="left:273px;top:501.3px;width:4px;height:16px;background:#eeeeec"></div>
<div class="a" style="left:68px;top:444px;width:15px;height:15px;background:#fff;border:1px solid #a9a59e;border-radius:1px"></div>
<svg class="a" style="left:90px;top:444px" width="16" height="16" viewBox="0 0 16 16"><ellipse cx="8" cy="8" rx="3.8" ry="3" fill="#c8553a" stroke="#8a3a2a" stroke-width=".5"/></svg>
<div class="a" style="left:68px;top:463.1px;width:15px;height:15px;background:#fff;border:1px solid #a9a59e;border-radius:1px"></div>
<svg class="a" style="left:89.5px;top:462.6px" width="16" height="16" viewBox="0 0 16 16"><rect x=".5" y=".5" width="15" height="15" fill="#ffffc0" stroke="#333" stroke-width="1"/></svg>
<svg class="a" style="left:51px;top:485.2px" width="7" height="10"><path d="M0.5,0.5 L6,5 L0.5,9.5Z" fill="#3a3a3a"/></svg>
<div class="a" style="left:68px;top:482.2px;width:15px;height:15px;background:#fff;border:1px solid #a9a59e;border-radius:1px"></div>
<svg class="a" style="left:70px;top:484.2px" width="11" height="11" viewBox="0 0 11 11"><path d="M1.5,5.5 L4.5,9 L9.5,1" fill="none" stroke="#111" stroke-width="1.8"/></svg>
<svg class="a" style="left:90px;top:482.2px" width="16" height="16" viewBox="0 0 16 16"><rect x="1" y="1" width="14" height="14" fill="#cfe0f2"/><rect x="1" y="1" width="4" height="4" fill="#1c2e44"/><rect x="9" y="1" width="4" height="4" fill="#1c2e44"/><rect x="5" y="5" width="4" height="4" fill="#2a4a6a"/><rect x="1" y="9" width="4" height="4" fill="#5a7a9a"/><rect x="9" y="9" width="4" height="3" fill="#9ab8d8"/><rect x="1" y="12" width="4" height="3" fill="#1c2e44"/><rect x="5" y="11" width="4" height="4" fill="#8aaacc"/></svg>
<svg class="a" style="left:51px;top:504.3px" width="7" height="10"><path d="M0.5,0.5 L6,5 L0.5,9.5Z" fill="#3a3a3a"/></svg>
<div class="a" style="left:68px;top:501.3px;width:15px;height:15px;background:#fff;border:1px solid #a9a59e;border-radius:1px"></div>
<svg class="a" style="left:90px;top:501.3px" width="16" height="16" viewBox="0 0 16 16"><rect x="1" y="1" width="14" height="14" fill="#cfe0f2"/><rect x="1" y="1" width="4" height="4" fill="#1c2e44"/><rect x="9" y="1" width="4" height="4" fill="#1c2e44"/><rect x="5" y="5" width="4" height="4" fill="#2a4a6a"/><rect x="1" y="9" width="4" height="4" fill="#5a7a9a"/><rect x="9" y="9" width="4" height="3" fill="#9ab8d8"/><rect x="1" y="12" width="4" height="3" fill="#1c2e44"/><rect x="5" y="11" width="4" height="4" fill="#8aaacc"/></svg>
<svg class="a" style="left:1625px;top:142px" width="12" height="12" viewBox="0 0 12 12"><rect x=".5" y=".5" width="11" height="11" rx="2" fill="none" stroke="#777" stroke-width="1"/><rect x="4.5" y="2.5" width="5" height="5" fill="none" stroke="#555" stroke-width="1"/><rect x="2.5" y="4.5" width="5" height="5" fill="#eee" stroke="#555" stroke-width="1"/></svg>
<svg class="a" style="left:1640px;top:142px" width="12" height="12" viewBox="0 0 12 12"><rect x=".5" y=".5" width="11" height="11" rx="2" fill="none" stroke="#777" stroke-width="1"/><path d="M3,3 L9,9 M9,3 L3,9" stroke="#444" stroke-width="1.8"/></svg>
<svg class="a" style="left:1347px;top:166px" width="17" height="17" viewBox="0 0 16 16"><g><polygon points="10.48,5.01 10.48,5.99 8.85,6.52 8.59,7.15 9.37,8.67 8.67,9.37 7.15,8.59 6.52,8.85 5.99,10.48 5.01,10.48 4.48,8.85 3.85,8.59 2.33,9.37 1.63,8.67 2.41,7.15 2.15,6.52 0.52,5.99 0.52,5.01 2.15,4.48 2.41,3.85 1.63,2.33 2.33,1.63 3.85,2.41 4.48,2.15 5.01,0.52 5.99,0.52 6.52,2.15 7.15,2.41 8.67,1.63 9.37,2.33 8.59,3.85 8.85,4.48" fill="#d42020" stroke="#a01010" stroke-width=".8"/><circle cx="5.5" cy="5.5" r="1.4" fill="#d42020" stroke="#a01010" stroke-width=".8"/></g><polygon points="14.98,7.61 14.98,8.39 13.68,8.81 13.47,9.32 14.09,10.54 13.54,11.09 12.32,10.47 11.81,10.68 11.39,11.98 10.61,11.98 10.19,10.68 9.68,10.47 8.46,11.09 7.91,10.54 8.53,9.32 8.32,8.81 7.02,8.39 7.02,7.61 8.32,7.19 8.53,6.68 7.91,5.46 8.46,4.91 9.68,5.53 10.19,5.32 10.61,4.02 11.39,4.02 11.81,5.32 12.32,5.53 13.54,4.91 14.09,5.46 13.47,6.68 13.68,7.19" fill="#888" stroke="#555" stroke-width=".8"/><circle cx="11" cy="8" r="1.12" fill="#eee" stroke="#555" stroke-width=".8"/><polygon points="9.98,12.16 9.98,12.84 8.84,13.21 8.66,13.65 9.21,14.72 8.72,15.21 7.65,14.66 7.21,14.84 6.84,15.98 6.16,15.98 5.79,14.84 5.35,14.66 4.28,15.21 3.79,14.72 4.34,13.65 4.16,13.21 3.02,12.84 3.02,12.16 4.16,11.79 4.34,11.35 3.79,10.28 4.28,9.79 5.35,10.34 5.79,10.16 6.16,9.02 6.84,9.02 7.21,10.16 7.65,10.34 8.72,9.79 9.21,10.28 8.66,11.35 8.84,11.79" fill="#9ab8e8" stroke="#6a8ac0" stroke-width=".8"/><circle cx="6.5" cy="12.5" r="0.98" fill="#eee" stroke="#6a8ac0" stroke-width=".8"/><path d="M11,13 H16 L13.5,15.5Z" fill="#333"/></svg>
<svg class="a" style="left:1374px;top:166px" width="17" height="17" viewBox="0 0 16 16"><path d="M7.5,1 C4,1 4.3,2.6 4.3,2.6 V4.2 H7.8 V4.8 H2.7 C2.7,4.8 0.7,4.6 0.7,8 C0.7,11.4 2.4,11.2 2.4,11.2 H3.6 V9.6 C3.6,9.6 3.5,7.8 5.4,7.8 H8.4 C8.4,7.8 10.2,7.9 10.2,6.1 V2.8 C10.2,2.8 10.5,1 7.5,1Z" fill="#3b74b0"/><path d="M8.1,14.6 C11.6,14.6 11.3,13 11.3,13 V11.4 H7.8 V10.8 H12.9 C12.9,10.8 14.9,11 14.9,7.6 C14.9,4.2 13.2,4.4 13.2,4.4 H12 V6 C12,6 12.1,7.8 10.2,7.8 H7.2 C7.2,7.8 5.4,7.7 5.4,9.5 V12.8 C5.4,12.8 5.1,14.6 8.1,14.6Z" fill="#f5cf3e"/><path d="M11,13 H16 L13.5,15.5Z" fill="#333"/></svg>
<svg class="a" style="left:1401px;top:166px" width="17" height="17" viewBox="0 0 16 16"><circle cx="8" cy="8" r="7" fill="#f5f5f5" stroke="#888" stroke-width="1"/><path d="M8,3.5 V8 L11,11" stroke="#666" stroke-width="1" fill="none"/></svg>
<svg class="a" style="left:1427px;top:166px" width="17" height="17" viewBox="0 0 16 16"><path d="M3,1 H10 L13,4 V15 H3Z" fill="#f5f5f5" stroke="#999" stroke-width=".8"/><path d="M5,6H11M5,8.5H11M5,11H11M5,13H9" stroke="#aaa" stroke-width=".8"/></svg>
<svg class="a" style="left:1461px;top:166px" width="17" height="17" viewBox="0 0 16 16"><path d="M1,1 H13 V10 H5 L1,14Z" fill="#f3dd45" stroke="#c9a72a" stroke-width=".7"/><path d="M9,14 L10,10 L15,3 L16,5 L11,12Z" fill="#c8b070" stroke="#777" stroke-width=".6"/></svg>
<svg class="a" style="left:1494px;top:166px" width="17" height="17" viewBox="0 0 16 16"><path d="M7,7 L14.5,14.5" stroke="#7a5a10" stroke-width="3.6" stroke-linecap="round"/><path d="M7,7 L14.5,14.5" stroke="#f2cf55" stroke-width="2.2" stroke-linecap="round"/><path d="M1.5,4.5 L4,2 L3,1 A4,4 0 0 1 8.5,6.5 L6.5,8.5 A4,4 0 0 1 1,3 Z" fill="#bbb" stroke="#555" stroke-width=".8"/></svg>
<div class="a" style="left:1452px;top:168px;width:1px;height:14px;background:#d4d1cb"></div>
<div class="a" style="left:1486px;top:168px;width:1px;height:14px;background:#d4d1cb"></div>
<div class="a" style="left:1339px;top:191.5px;width:315px;height:25px;background:#fff;border:1px solid #b3afa8;border-radius:3px"></div>
<svg class="a" style="left:1348px;top:197px" width="14" height="14" viewBox="0 0 16 16"><circle cx="6.5" cy="6.5" r="4.5" fill="none" stroke="#666" stroke-width="1.3"/><path d="M10,10 L14,14" stroke="#666" stroke-width="1.8"/></svg>
<div class="a" style="left:1338.5px;top:216.5px;width:315.5px;height:471px;background:#fff;border:1px solid #b3afa8"></div>
<svg class="a" style="left:1347px;top:222.7px" width="7" height="10"><path d="M0.5,0.5 L6,5 L0.5,9.5Z" fill="#3a3a3a"/></svg>
<svg class="a" style="left:1364px;top:219.2px" width="17" height="17" viewBox="0 0 16 16"><circle cx="8" cy="8" r="7" fill="#f8f8f8" stroke="#888" stroke-width="1"/><path d="M8,3.5 V8.5 L11,10.5" stroke="#777" stroke-width="1" fill="none"/></svg>
<svg class="a" style="left:1347px;top:242.82px" width="7" height="10"><path d="M0.5,0.5 L6,5 L0.5,9.5Z" fill="#3a3a3a"/></svg>
<svg class="a" style="left:1364px;top:239.32px" width="17" height="17" viewBox="0 0 16 16"><circle cx="7.3" cy="7.3" r="5" fill="none" stroke="#5aa02c" stroke-width="2.6"/><path d="M9,9 L14.5,14.5" stroke="#5aa02c" stroke-width="2.6"/><path d="M8.5,6.5 L13,7.5 L10,11Z" fill="#f0c020"/><circle cx="7.3" cy="7.3" r="1.8" fill="#fff"/></svg>
<svg class="a" style="left:1347px;top:262.94px" width="7" height="10"><path d="M0.5,0.5 L6,5 L0.5,9.5Z" fill="#3a3a3a"/></svg>
<svg class="a" style="left:1364px;top:259.44px" width="17" height="17" viewBox="0 0 16 16"><circle cx="7.3" cy="7.3" r="5" fill="none" stroke="#5aa02c" stroke-width="2.6"/><path d="M9,9 L14.5,14.5" stroke="#5aa02c" stroke-width="2.6"/><path d="M8.5,6.5 L13,7.5 L10,11Z" fill="#f0c020"/><circle cx="7.3" cy="7.3" r="1.8" fill="#fff"/></svg>
<svg class="a" style="left:1347px;top:283.06px" width="7" height="10"><path d="M0.5,0.5 L6,5 L0.5,9.5Z" fill="#3a3a3a"/></svg>
<svg class="a" style="left:1364px;top:279.56px" width="17" height="17" viewBox="0 0 16 16"><circle cx="7.3" cy="7.3" r="5" fill="none" stroke="#5aa02c" stroke-width="2.6"/><path d="M9,9 L14.5,14.5" stroke="#5aa02c" stroke-width="2.6"/><path d="M8.5,6.5 L13,7.5 L10,11Z" fill="#f0c020"/><circle cx="7.3" cy="7.3" r="1.8" fill="#fff"/></svg>
<svg class="a" style="left:1347px;top:303.18px" width="7" height="10"><path d="M0.5,0.5 L6,5 L0.5,9.5Z" fill="#3a3a3a"/></svg>
<svg class="a" style="left:1364px;top:299.68px" width="17" height="17" viewBox="0 0 16 16"><circle cx="7.3" cy="7.3" r="5" fill="none" stroke="#5aa02c" stroke-width="2.6"/><path d="M9,9 L14.5,14.5" stroke="#5aa02c" stroke-width="2.6"/><path d="M8.5,6.5 L13,7.5 L10,11Z" fill="#f0c020"/><circle cx="7.3" cy="7.3" r="1.8" fill="#fff"/></svg>
<svg class="a" style="left:1347px;top:323.3px" width="7" height="10"><path d="M0.5,0.5 L6,5 L0.5,9.5Z" fill="#3a3a3a"/></svg>
<svg class="a" style="left:1364px;top:319.8px" width="17" height="17" viewBox="0 0 16 16"><circle cx="7.3" cy="7.3" r="5" fill="none" stroke="#5aa02c" stroke-width="2.6"/><path d="M9,9 L14.5,14.5" stroke="#5aa02c" stroke-width="2.6"/><path d="M8.5,6.5 L13,7.5 L10,11Z" fill="#f0c020"/><circle cx="7.3" cy="7.3" r="1.8" fill="#fff"/></svg>
<svg class="a" style="left:1347px;top:343.42px" width="7" height="10"><path d="M0.5,0.5 L6,5 L0.5,9.5Z" fill="#3a3a3a"/></svg>
<svg class="a" style="left:1364px;top:339.92px" width="17" height="17" viewBox="0 0 16 16"><circle cx="7.3" cy="7.3" r="5" fill="none" stroke="#5aa02c" stroke-width="2.6"/><path d="M9,9 L14.5,14.5" stroke="#5aa02c" stroke-width="2.6"/><path d="M8.5,6.5 L13,7.5 L10,11Z" fill="#f0c020"/><circle cx="7.3" cy="7.3" r="1.8" fill="#fff"/></svg>
<svg class="a" style="left:1347px;top:363.54px" width="7" height="10"><path d="M0.5,0.5 L6,5 L0.5,9.5Z" fill="#3a3a3a"/></svg>
<svg class="a" style="left:1364px;top:360.04px" width="17" height="17" viewBox="0 0 16 16"><circle cx="7.3" cy="7.3" r="5" fill="none" stroke="#5aa02c" stroke-width="2.6"/><path d="M9,9 L14.5,14.5" stroke="#5aa02c" stroke-width="2.6"/><path d="M8.5,6.5 L13,7.5 L10,11Z" fill="#f0c020"/><circle cx="7.3" cy="7.3" r="1.8" fill="#fff"/></svg>
<svg class="a" style="left:1347px;top:383.66px" width="7" height="10"><path d="M0.5,0.5 L6,5 L0.5,9.5Z" fill="#3a3a3a"/></svg>
<svg class="a" style="left:1364px;top:380.16px" width="17" height="17" viewBox="0 0 16 16"><circle cx="7.3" cy="7.3" r="5" fill="none" stroke="#5aa02c" stroke-width="2.6"/><path d="M9,9 L14.5,14.5" stroke="#5aa02c" stroke-width="2.6"/><path d="M8.5,6.5 L13,7.5 L10,11Z" fill="#f0c020"/><circle cx="7.3" cy="7.3" r="1.8" fill="#fff"/></svg>
<svg class="a" style="left:1347px;top:403.78px" width="7" height="10"><path d="M0.5,0.5 L6,5 L0.5,9.5Z" fill="#3a3a3a"/></svg>
<svg class="a" style="left:1364px;top:400.28px" width="17" height="17" viewBox="0 0 16 16"><circle cx="7.3" cy="7.3" r="5" fill="none" stroke="#5aa02c" stroke-width="2.6"/><path d="M9,9 L14.5,14.5" stroke="#5aa02c" stroke-width="2.6"/><path d="M8.5,6.5 L13,7.5 L10,11Z" fill="#f0c020"/><circle cx="7.3" cy="7.3" r="1.8" fill="#fff"/></svg>
<svg class="a" style="left:1347px;top:423.9px" width="7" height="10"><path d="M0.5,0.5 L6,5 L0.5,9.5Z" fill="#3a3a3a"/></svg>
<svg class="a" style="left:1364px;top:420.4px" width="17" height="17" viewBox="0 0 16 16"><circle cx="7.3" cy="7.3" r="5" fill="none" stroke="#5aa02c" stroke-width="2.6"/><path d="M9,9 L14.5,14.5" stroke="#5aa02c" stroke-width="2.6"/><path d="M8.5,6.5 L13,7.5 L10,11Z" fill="#f0c020"/><circle cx="7.3" cy="7.3" r="1.8" fill="#fff"/></svg>
<svg class="a" style="left:1347px;top:444.02px" width="7" height="10"><path d="M0.5,0.5 L6,5 L0.5,9.5Z" fill="#3a3a3a"/></svg>
<svg class="a" style="left:1364px;top:440.52px" width="17" height="17" viewBox="0 0 16 16"><circle cx="7.3" cy="7.3" r="5" fill="none" stroke="#5aa02c" stroke-width="2.6"/><path d="M9,9 L14.5,14.5" stroke="#5aa02c" stroke-width="2.6"/><path d="M8.5,6.5 L13,7.5 L10,11Z" fill="#f0c020"/><circle cx="7.3" cy="7.3" r="1.8" fill="#fff"/></svg>
<svg class="a" style="left:1347px;top:464.14px" width="7" height="10"><path d="M0.5,0.5 L6,5 L0.5,9.5Z" fill="#3a3a3a"/></svg>
<svg class="a" style="left:1364px;top:460.64px" width="17" height="17" viewBox="0 0 16 16"><circle cx="7.3" cy="7.3" r="5" fill="none" stroke="#5aa02c" stroke-width="2.6"/><path d="M9,9 L14.5,14.5" stroke="#5aa02c" stroke-width="2.6"/><path d="M8.5,6.5 L13,7.5 L10,11Z" fill="#f0c020"/><circle cx="7.3" cy="7.3" r="1.8" fill="#fff"/></svg>
<svg class="a" style="left:1347px;top:484.26px" width="7" height="10"><path d="M0.5,0.5 L6,5 L0.5,9.5Z" fill="#3a3a3a"/></svg>
<svg class="a" style="left:1364px;top:480.76px" width="17" height="17" viewBox="0 0 16 16"><circle cx="7.3" cy="7.3" r="5" fill="none" stroke="#5aa02c" stroke-width="2.6"/><path d="M9,9 L14.5,14.5" stroke="#5aa02c" stroke-width="2.6"/><path d="M8.5,6.5 L13,7.5 L10,11Z" fill="#f0c020"/><circle cx="7.3" cy="7.3" r="1.8" fill="#fff"/></svg>
<svg class="a" style="left:1347px;top:504.38px" width="7" height="10"><path d="M0.5,0.5 L6,5 L0.5,9.5Z" fill="#3a3a3a"/></svg>
<svg class="a" style="left:1364px;top:500.88px" width="17" height="17" viewBox="0 0 16 16"><circle cx="7.3" cy="7.3" r="5" fill="none" stroke="#5aa02c" stroke-width="2.6"/><path d="M9,9 L14.5,14.5" stroke="#5aa02c" stroke-width="2.6"/><path d="M8.5,6.5 L13,7.5 L10,11Z" fill="#f0c020"/><circle cx="7.3" cy="7.3" r="1.8" fill="#fff"/></svg>
<svg class="a" style="left:1347px;top:524.5px" width="7" height="10"><path d="M0.5,0.5 L6,5 L0.5,9.5Z" fill="#3a3a3a"/></svg>
<svg class="a" style="left:1364px;top:521px" width="17" height="17" viewBox="0 0 16 16"><circle cx="7.3" cy="7.3" r="5" fill="none" stroke="#5aa02c" stroke-width="2.6"/><path d="M9,9 L14.5,14.5" stroke="#5aa02c" stroke-width="2.6"/><path d="M8.5,6.5 L13,7.5 L10,11Z" fill="#f0c020"/><circle cx="7.3" cy="7.3" r="1.8" fill="#fff"/></svg>
<svg class="a" style="left:1347px;top:544.62px" width="7" height="10"><path d="M0.5,0.5 L6,5 L0.5,9.5Z" fill="#3a3a3a"/></svg>
<svg class="a" style="left:1364px;top:541.12px" width="17" height="17" viewBox="0 0 16 16"><circle cx="7.3" cy="7.3" r="5" fill="none" stroke="#5aa02c" stroke-width="2.6"/><path d="M9,9 L14.5,14.5" stroke="#5aa02c" stroke-width="2.6"/><path d="M8.5,6.5 L13,7.5 L10,11Z" fill="#f0c020"/><circle cx="7.3" cy="7.3" r="1.8" fill="#fff"/></svg>
<svg class="a" style="left:1347px;top:564.74px" width="7" height="10"><path d="M0.5,0.5 L6,5 L0.5,9.5Z" fill="#3a3a3a"/></svg>
<svg class="a" style="left:1364px;top:561.24px" width="17" height="17" viewBox="0 0 16 16"><circle cx="7.3" cy="7.3" r="5" fill="none" stroke="#5aa02c" stroke-width="2.6"/><path d="M9,9 L14.5,14.5" stroke="#5aa02c" stroke-width="2.6"/><path d="M8.5,6.5 L13,7.5 L10,11Z" fill="#f0c020"/><circle cx="7.3" cy="7.3" r="1.8" fill="#fff"/></svg>
<svg class="a" style="left:1347px;top:584.86px" width="7" height="10"><path d="M0.5,0.5 L6,5 L0.5,9.5Z" fill="#3a3a3a"/></svg>
<svg class="a" style="left:1364px;top:581.36px" width="17" height="17" viewBox="0 0 16 16"><polygon points="14.97,7.31 14.97,8.69 12.69,9.42 12.32,10.31 13.41,12.44 12.44,13.41 10.31,12.32 9.42,12.69 8.69,14.97 7.31,14.97 6.58,12.69 5.69,12.32 3.56,13.41 2.59,12.44 3.68,10.31 3.31,9.42 1.03,8.69 1.03,7.31 3.31,6.58 3.68,5.69 2.59,3.56 3.56,2.59 5.69,3.68 6.58,3.31 7.31,1.03 8.69,1.03 9.42,3.31 10.31,3.68 12.44,2.59 13.41,3.56 12.32,5.69 12.69,6.58" fill="#9ab8e8" stroke="#6a8ac0" stroke-width=".8"/><circle cx="8" cy="8" r="1.96" fill="#eee" stroke="#6a8ac0" stroke-width=".8"/></svg>
<svg class="a" style="left:1347px;top:604.98px" width="7" height="10"><path d="M0.5,0.5 L6,5 L0.5,9.5Z" fill="#3a3a3a"/></svg>
<svg class="a" style="left:1364px;top:601.48px" width="17" height="17" viewBox="0 0 16 16"><circle cx="9.5" cy="8" r="5.5" fill="#3a9ad0" stroke="#226" stroke-width=".6"/><path d="M1,3 L6,6" stroke="#555" stroke-width="1"/><text x="0.5" y="15.5" font-family="Liberation Sans" font-weight="bold" font-size="5.5" fill="#111">GDAL</text></svg>
<svg class="a" style="left:1347px;top:625.1px" width="7" height="10"><path d="M0.5,0.5 L6,5 L0.5,9.5Z" fill="#3a3a3a"/></svg>
<svg class="a" style="left:1364px;top:621.6px" width="17" height="17" viewBox="0 0 16 16"><path d="M8,2 L11,6 L14,5 L11,9 L14,12 L8,11 L2,12 L5,9 L2,5 L5,6Z" fill="#e8f0e0" stroke="#5a8a3a" stroke-width=".7"/><path d="M8,14 V5 M6,13 L4,7 M10,13 L12,7" stroke="#3a7a2a" stroke-width="1"/><ellipse cx="8" cy="14" rx="5" ry="1.5" fill="#aaa"/></svg>
<svg class="a" style="left:1347px;top:645.22px" width="7" height="10"><path d="M0.5,0.5 L6,5 L0.5,9.5Z" fill="#3a3a3a"/></svg>
<svg class="a" style="left:1364px;top:641.72px" width="17" height="17" viewBox="0 0 16 16"><polygon points="8.68,4.09 8.68,4.91 7.31,5.35 7.09,5.89 7.75,7.16 7.16,7.75 5.89,7.09 5.35,7.31 4.91,8.68 4.09,8.68 3.65,7.31 3.11,7.09 1.84,7.75 1.25,7.16 1.91,5.89 1.69,5.35 0.32,4.91 0.32,4.09 1.69,3.65 1.91,3.11 1.25,1.84 1.84,1.25 3.11,1.91 3.65,1.69 4.09,0.32 4.91,0.32 5.35,1.69 5.89,1.91 7.16,1.25 7.75,1.84 7.09,3.11 7.31,3.65" fill="#d42020" stroke="#a01010" stroke-width=".8"/><circle cx="4.5" cy="4.5" r="1.176" fill="#d42020" stroke="#a01010" stroke-width=".8"/><polygon points="15.28,7.13 15.28,7.87 14.05,8.27 13.85,8.75 14.44,9.91 13.91,10.44 12.75,9.85 12.27,10.05 11.87,11.28 11.13,11.28 10.73,10.05 10.25,9.85 9.09,10.44 8.56,9.91 9.15,8.75 8.95,8.27 7.72,7.87 7.72,7.13 8.95,6.73 9.15,6.25 8.56,5.09 9.09,4.56 10.25,5.15 10.73,4.95 11.13,3.72 11.87,3.72 12.27,4.95 12.75,5.15 13.91,4.56 14.44,5.09 13.85,6.25 14.05,6.73" fill="#999" stroke="#666" stroke-width=".8"/><circle cx="11.5" cy="7.5" r="1.064" fill="#eee" stroke="#666" stroke-width=".8"/><polygon points="9.48,11.66 9.48,12.34 8.34,12.71 8.16,13.15 8.71,14.22 8.22,14.71 7.15,14.16 6.71,14.34 6.34,15.48 5.66,15.48 5.29,14.34 4.85,14.16 3.78,14.71 3.29,14.22 3.84,13.15 3.66,12.71 2.52,12.34 2.52,11.66 3.66,11.29 3.84,10.85 3.29,9.78 3.78,9.29 4.85,9.84 5.29,9.66 5.66,8.52 6.34,8.52 6.71,9.66 7.15,9.84 8.22,9.29 8.71,9.78 8.16,10.85 8.34,11.29" fill="#9ab8e8" stroke="#6a8ac0" stroke-width=".8"/><circle cx="6" cy="12" r="0.98" fill="#eee" stroke="#6a8ac0" stroke-width=".8"/></svg>
<svg class="a" style="left:1347px;top:665.34px" width="7" height="10"><path d="M0.5,0.5 L6,5 L0.5,9.5Z" fill="#3a3a3a"/></svg>
<svg class="a" style="left:1364px;top:661.84px" width="17" height="17" viewBox="0 0 16 16"><path d="M7.5,1 C4,1 4.3,2.6 4.3,2.6 V4.2 H7.8 V4.8 H2.7 C2.7,4.8 0.7,4.6 0.7,8 C0.7,11.4 2.4,11.2 2.4,11.2 H3.6 V9.6 C3.6,9.6 3.5,7.8 5.4,7.8 H8.4 C8.4,7.8 10.2,7.9 10.2,6.1 V2.8 C10.2,2.8 10.5,1 7.5,1Z" fill="#3b74b0"/><path d="M8.1,14.6 C11.6,14.6 11.3,13 11.3,13 V11.4 H7.8 V10.8 H12.9 C12.9,10.8 14.9,11 14.9,7.6 C14.9,4.2 13.2,4.4 13.2,4.4 H12 V6 C12,6 12.1,7.8 10.2,7.8 H7.2 C7.2,7.8 5.4,7.7 5.4,9.5 V12.8 C5.4,12.8 5.1,14.6 8.1,14.6Z" fill="#f5cf3e"/></svg>
<div class="a" style="left:1338.5px;top:690.5px;width:119px;height:24.5px;background:#dedbd6;border:1px solid #bbb7b0;border-top-color:#c8c4bd;border-radius:4px 0 0 4px"></div>
<div class="a" style="left:1457px;top:690.5px;width:165px;height:27px;background:#f5f4f2;border:1px solid #bbb7b0;border-top:none;border-radius:0 0 4px 4px"></div>
<div class="a" style="left:4px;top:722.5px;width:288.5px;height:26px;background:#fff;border:1px solid #b3afa8;border-radius:3px"></div>
<svg class="a" style="left:13px;top:728px" width="14" height="14" viewBox="0 0 16 16"><circle cx="6.5" cy="6.5" r="4.5" fill="none" stroke="#666" stroke-width="1.3"/><path d="M10,10 L14,14" stroke="#666" stroke-width="1.8"/></svg>
<div class="a" style="left:753.6px;top:723.6px;width:121.7px;height:23.7px;background:#fff;border:1px solid #b3afa8;border-radius:3px"></div>
<svg class="a" style="left:879px;top:726px" width="17" height="17" viewBox="0 0 16 16"><ellipse cx="8" cy="9" rx="5" ry="6" fill="#ccc" stroke="#333" stroke-width="1" transform="rotate(-30 8 9)"/><path d="M5,4 L9,10" stroke="#333" stroke-width="1"/><circle cx="9" cy="11" r="2" fill="#fff" stroke="#333" stroke-width=".8"/><path d="M13,3 L15,1" stroke="#555" stroke-width=".8"/></svg>
<div class="a" style="left:945.5px;top:722.7px;width:101px;height:25.3px;background:#fff;border:1px solid #b3afa8;border-radius:3px"></div>
<div class="a" style="left:1025.6px;top:723.7px;width:1px;height:23.3px;background:#c8c5bf"></div>
<svg class="a" style="left:1031px;top:733px" width="10" height="6"><path d="M1,0.5H9L5,4.5Z" fill="#555"/></svg>
<svg class="a" style="left:1059px;top:727px" width="15" height="15" viewBox="0 0 16 16"><path d="M4.5,7 V5 A3.5,3.5 0 0 1 11.5,5 V7" fill="none" stroke="#555" stroke-width="1.8"/><rect x="2.5" y="7" width="11" height="8" rx="1.5" fill="#555"/></svg>
<div class="a" style="left:1142px;top:723.7px;width:102px;height:24.3px;background:#fff;border:1px solid #b3afa8;border-radius:3px"></div>
<div class="a" style="left:1229px;top:724.7px;width:1px;height:22.3px;background:#c8c5bf"></div>
<svg class="a" style="left:1232px;top:727px" width="10" height="18"><path d="M1,5.5H9L5,1.5Z M1,12H9L5,16Z" fill="#555"/></svg>
<div class="a" style="left:1315.5px;top:723.7px;width:99px;height:24.3px;background:#fff;border:1px solid #b3afa8;border-radius:3px"></div>
<div class="a" style="left:1400.5px;top:724.7px;width:1px;height:22.3px;background:#c8c5bf"></div>
<svg class="a" style="left:1403px;top:727px" width="10" height="18"><path d="M1,5.5H9L5,1.5Z M1,12H9L5,16Z" fill="#555"/></svg>
<div class="a" style="left:1421px;top:728.5px;width:14.8px;height:13.4px;background:#fff;border:1px solid #a9a59e"></div>
<svg class="a" style="left:1423px;top:730px" width="11" height="11" viewBox="0 0 11 11"><path d="M1.5,5.5 L4.5,9 L9.5,1" fill="none" stroke="#111" stroke-width="1.8"/></svg>
<svg class="a" style="left:1502px;top:729px" width="16" height="16" viewBox="0 0 16 16"><circle cx="8" cy="8" r="6.5" fill="none" stroke="#666" stroke-width="1"/><ellipse cx="8" cy="8" rx="3" ry="6.5" fill="none" stroke="#666" stroke-width=".9"/><path d="M1.5,8H14.5M2.5,4.5H13.5M2.5,11.5H13.5" stroke="#666" stroke-width=".9"/></svg>
<svg class="a" style="left:1605px;top:729px" width="17" height="17" viewBox="0 0 16 16"><path d="M3,2 H13 A2.5,2.5 0 0 1 15.5,4.5 V9 A2.5,2.5 0 0 1 13,11.5 H9 L5,15 V11.5 H3 A2.5,2.5 0 0 1 0.5,9 V4.5 A2.5,2.5 0 0 1 3,2Z" fill="#444"/><circle cx="4.5" cy="6.8" r="1.1" fill="#fff"/><circle cx="8" cy="6.8" r="1.1" fill="#fff"/><circle cx="11.5" cy="6.8" r="1.1" fill="#fff"/></svg>
<svg class="a" style="left:1642px;top:740px" width="10" height="9"><rect x="8" y="0" width="1" height="1" fill="#aaa"/><rect x="5" y="3" width="1" height="1" fill="#aaa"/><rect x="8" y="3" width="1" height="1" fill="#aaa"/><rect x="2" y="6" width="1" height="1" fill="#aaa"/><rect x="5" y="6" width="1" height="1" fill="#aaa"/><rect x="8" y="6" width="1" height="1" fill="#aaa"/></svg>
<span class="a t" style="left:723.8px;top:8.85px;font-size:14px;line-height:14px;color:#dfdbd2;font-weight:bold;letter-spacing:0.842px">documentation3.qgs - QGIS</span>
<span class="a t" style="left:11.4px;top:36.38px;font-size:15.5px;line-height:15.5px;color:#1c1c1c;letter-spacing:0.251px">Pro<u>j</u>ect</span>
<span class="a t" style="left:76.2px;top:36.38px;font-size:15.5px;line-height:15.5px;color:#1c1c1c;letter-spacing:0.623px"><u>E</u>dit</span>
<span class="a t" style="left:120.6px;top:36.38px;font-size:15.5px;line-height:15.5px;color:#1c1c1c;letter-spacing:0.521px"><u>V</u>iew</span>
<span class="a t" style="left:172px;top:36.38px;font-size:15.5px;line-height:15.5px;color:#1c1c1c;letter-spacing:-0.155px"><u>L</u>ayer</span>
<span class="a t" style="left:226px;top:36.38px;font-size:15.5px;line-height:15.5px;color:#1c1c1c;letter-spacing:0.374px"><u>S</u>ettings</span>
<span class="a t" style="left:301.4px;top:36.38px;font-size:15.5px;line-height:15.5px;color:#1c1c1c;letter-spacing:0.109px"><u>P</u>lugins</span>
<span class="a t" style="left:368.2px;top:36.38px;font-size:15.5px;line-height:15.5px;color:#1c1c1c;letter-spacing:0.476px">Vect<u>o</u>r</span>
<span class="a t" style="left:431.2px;top:36.38px;font-size:15.5px;line-height:15.5px;color:#1c1c1c;letter-spacing:0.025px"><u>R</u>aster</span>
<span class="a t" style="left:491.4px;top:36.38px;font-size:15.5px;line-height:15.5px;color:#1c1c1c"><u>D</u>atabase</span>
<span class="a t" style="left:575.2px;top:36.38px;font-size:15.5px;line-height:15.5px;color:#1c1c1c;letter-spacing:0.070px"><u>W</u>eb</span>
<span class="a t" style="left:623.5px;top:36.38px;font-size:15.5px;line-height:15.5px;color:#1c1c1c;letter-spacing:-0.101px"><u>M</u>esh</span>
<span class="a t" style="left:677.3px;top:36.38px;font-size:15.5px;line-height:15.5px;color:#1c1c1c;letter-spacing:-0.048px">Pro<u>c</u>essing</span>
<span class="a t" style="left:770px;top:36.38px;font-size:15.5px;line-height:15.5px;color:#1c1c1c;letter-spacing:0.281px"><u>H</u>elp</span>
<span class="a t" style="left:47.4px;top:140.96px;font-size:16px;line-height:16px;color:#1c1c1c;letter-spacing:0.046px">Browser</span>
<span class="a t" style="left:91.9px;top:194.46px;font-size:16px;line-height:16px;color:#1c1c1c">Favorites</span>
<span class="a t" style="left:91.9px;top:214.56px;font-size:16px;line-height:16px;color:#1c1c1c">Project Home</span>
<span class="a t" style="left:91.9px;top:234.66px;font-size:16px;line-height:16px;color:#1c1c1c">Spatial Bookmarks</span>
<span class="a t" style="left:91.9px;top:254.76px;font-size:16px;line-height:16px;color:#1c1c1c">Home</span>
<span class="a t" style="left:91.9px;top:274.86px;font-size:16px;line-height:16px;color:#1c1c1c">/</span>
<span class="a t" style="left:91.9px;top:294.96px;font-size:16px;line-height:16px;color:#1c1c1c">GeoPackage</span>
<span class="a t" style="left:91.9px;top:315.06px;font-size:16px;line-height:16px;color:#1c1c1c">SpatiaLite</span>
<span class="a t" style="left:91.9px;top:335.16px;font-size:16px;line-height:16px;color:#1c1c1c">PostGIS</span>
<span class="a t" style="left:91.9px;top:355.26px;font-size:16px;line-height:16px;color:#1c1c1c">MSSQL</span>
<span class="a t" style="left:91.9px;top:375.36px;font-size:16px;line-height:16px;color:#1c1c1c;height:4.64px;overflow:hidden">DB2</span>
<span class="a t" style="left:47px;top:389.96px;font-size:16px;line-height:16px;color:#1c1c1c">Layers</span>
<span class="a t" style="left:113px;top:445.00px;font-size:15px;line-height:15px;color:#fff;font-weight:bold;font-style:italic;text-decoration:underline">airports</span>
<span class="a t" style="left:113px;top:464.10px;font-size:15px;line-height:15px;color:#8a8a8a;font-weight:bold;font-style:italic">regions</span>
<span class="a t" style="left:113px;top:483.20px;font-size:15px;line-height:15px;color:#111;font-weight:bold">landcover</span>
<span class="a t" style="left:113px;top:502.30px;font-size:15px;line-height:15px;color:#8a8a8a;font-weight:bold;font-style:italic">SR_50M_alaska_nad</span>
<span class="a t" style="left:1343.7px;top:140.36px;font-size:16px;line-height:16px;color:#1c1c1c;letter-spacing:-0.041px">Processing Toolbox</span>
<span class="a t" style="left:1369.6px;top:196.46px;font-size:16px;line-height:16px;color:#8b8b8b">Search...</span>
<span class="a t" style="left:1387.5px;top:220.16px;font-size:16px;line-height:16px;color:#1c1c1c">Recently used</span>
<span class="a t" style="left:1387.5px;top:240.28px;font-size:16px;line-height:16px;color:#1c1c1c">Cartography</span>
<span class="a t" style="left:1387.5px;top:260.40px;font-size:16px;line-height:16px;color:#1c1c1c">Database</span>
<span class="a t" style="left:1387.5px;top:280.52px;font-size:16px;line-height:16px;color:#1c1c1c">File tools</span>
<span class="a t" style="left:1387.5px;top:300.64px;font-size:16px;line-height:16px;color:#1c1c1c">Graphics</span>
<span class="a t" style="left:1387.5px;top:320.76px;font-size:16px;line-height:16px;color:#1c1c1c">Interpolation</span>
<span class="a t" style="left:1387.5px;top:340.88px;font-size:16px;line-height:16px;color:#1c1c1c">Layer tools</span>
<span class="a t" style="left:1387.5px;top:361.00px;font-size:16px;line-height:16px;color:#1c1c1c">Network analysis</span>
<span class="a t" style="left:1387.5px;top:381.12px;font-size:16px;line-height:16px;color:#1c1c1c">Raster analysis</span>
<span class="a t" style="left:1387.5px;top:401.24px;font-size:16px;line-height:16px;color:#1c1c1c">Raster terrain analysis</span>
<span class="a t" style="left:1387.5px;top:421.36px;font-size:16px;line-height:16px;color:#1c1c1c">Raster tools</span>
<span class="a t" style="left:1387.5px;top:441.48px;font-size:16px;line-height:16px;color:#1c1c1c">Vector analysis</span>
<span class="a t" style="left:1387.5px;top:461.60px;font-size:16px;line-height:16px;color:#1c1c1c">Vector creation</span>
<span class="a t" style="left:1387.5px;top:481.72px;font-size:16px;line-height:16px;color:#1c1c1c">Vector general</span>
<span class="a t" style="left:1387.5px;top:501.84px;font-size:16px;line-height:16px;color:#1c1c1c">Vector geometry</span>
<span class="a t" style="left:1387.5px;top:521.96px;font-size:16px;line-height:16px;color:#1c1c1c">Vector overlay</span>
<span class="a t" style="left:1387.5px;top:542.08px;font-size:16px;line-height:16px;color:#1c1c1c">Vector selection</span>
<span class="a t" style="left:1387.5px;top:562.20px;font-size:16px;line-height:16px;color:#1c1c1c">Vector table</span>
<span class="a t" style="left:1387.5px;top:582.32px;font-size:16px;line-height:16px;color:#1c1c1c">Climb</span>
<span class="a t" style="left:1387.5px;top:602.44px;font-size:16px;line-height:16px;color:#1c1c1c">GDAL</span>
<span class="a t" style="left:1387.5px;top:622.56px;font-size:16px;line-height:16px;color:#1c1c1c">GRASS</span>
<span class="a t" style="left:1387.5px;top:642.68px;font-size:16px;line-height:16px;color:#1c1c1c">Models</span>
<span class="a t" style="left:1387.5px;top:662.80px;font-size:16px;line-height:16px;color:#1c1c1c">Scripts</span>
<span class="a t" style="left:1351.5px;top:695.56px;font-size:16px;line-height:16px;color:#1c1c1c;letter-spacing:-0.038px">Layer Styling</span>
<span class="a t" style="left:1470.6px;top:696.46px;font-size:16px;line-height:16px;color:#1c1c1c;letter-spacing:-0.041px">Processing Toolbox</span>
<span class="a t" style="left:35.4px;top:727.96px;font-size:16px;line-height:16px;color:#8b8b8b;letter-spacing:-0.001px">Type to locate (Ctrl+K)</span>
<span class="a t" style="left:685.6px;top:729.00px;font-size:13px;line-height:13px;color:#1c1c1c;letter-spacing:0.000px">Coordinate</span>
<span class="a t" style="left:763px;top:729.50px;font-size:13px;line-height:13px;color:#1c1c1c;letter-spacing:-0.239px">176.2207,67.2258</span>
<span class="a t" style="left:911px;top:729.50px;font-size:13px;line-height:13px;color:#1c1c1c;letter-spacing:-0.704px">Scale</span>
<span class="a t" style="left:949px;top:729.50px;font-size:13px;line-height:13px;color:#1c1c1c;letter-spacing:-0.218px">1:14739258</span>
<span class="a t" style="left:1082px;top:729.50px;font-size:13px;line-height:13px;color:#1c1c1c;letter-spacing:0.237px">Magnifier</span>
<span class="a t" style="left:1148px;top:729.50px;font-size:13px;line-height:13px;color:#1c1c1c;letter-spacing:-0.387px">100%</span>
<span class="a t" style="left:1255px;top:729.50px;font-size:13px;line-height:13px;color:#1c1c1c;letter-spacing:0.198px">Rotation</span>
<span class="a t" style="left:1320px;top:729.50px;font-size:13px;line-height:13px;color:#1c1c1c;letter-spacing:-0.376px">0,0 °</span>
<span class="a t" style="left:1441.7px;top:729.50px;font-size:13px;line-height:13px;color:#1c1c1c;letter-spacing:-0.273px">Render</span>
<span class="a t" style="left:1523px;top:730.40px;font-size:13px;line-height:13px;color:#1c1c1c;letter-spacing:-0.817px">EPSG:2964</span>
<div class="a badge" style="left:543.65px;top:23.55px;width:31.5px;height:31.5px"></div>
<svg class="a" style="left:0;top:0" width="600" height="60"><path d="M559,30 H563.4 V48.7 H559 V35.6 L554.6,37.8 L553.6,34.3 Z" fill="#000"/></svg>
<div class="a badge" style="left:519.95px;top:80.65px;width:31.5px;height:31.5px;font-size:26px;line-height:32.5px"><span style="display:inline-block;transform:scaleX(.92)">2</span></div>
<div class="a badge" style="left:145.85px;top:258.75px;width:31.3px;height:31.3px;font-size:26px;line-height:32.3px"><span style="display:inline-block;transform:scaleX(.92)">3</span></div>
<div class="a badge" style="left:3.85px;top:316.05px;width:31.5px;height:31.5px;font-size:26px;line-height:32.5px"><span style="display:inline-block;transform:scaleX(.92)">2</span></div>
<div class="a badge" style="left:141.75px;top:528.55px;width:31.3px;height:31.3px;font-size:26px;line-height:32.3px"><span style="display:inline-block;transform:scaleX(.92)">3</span></div>
<div class="a badge" style="left:878.75px;top:414.65px;width:31.5px;height:31.5px;font-size:26px;line-height:32.5px"><span style="display:inline-block;transform:scaleX(.92)">4</span></div>
<div class="a badge" style="left:1505.85px;top:429.75px;width:31.3px;height:31.3px;font-size:26px;line-height:32.3px"><span style="display:inline-block;transform:scaleX(.92)">3</span></div>
<div class="a badge" style="left:617.75px;top:718.45px;width:31.5px;height:31.5px;font-size:26px;line-height:32.5px"><span style="display:inline-block;transform:scaleX(.92)">5</span></div>
</body></html>
